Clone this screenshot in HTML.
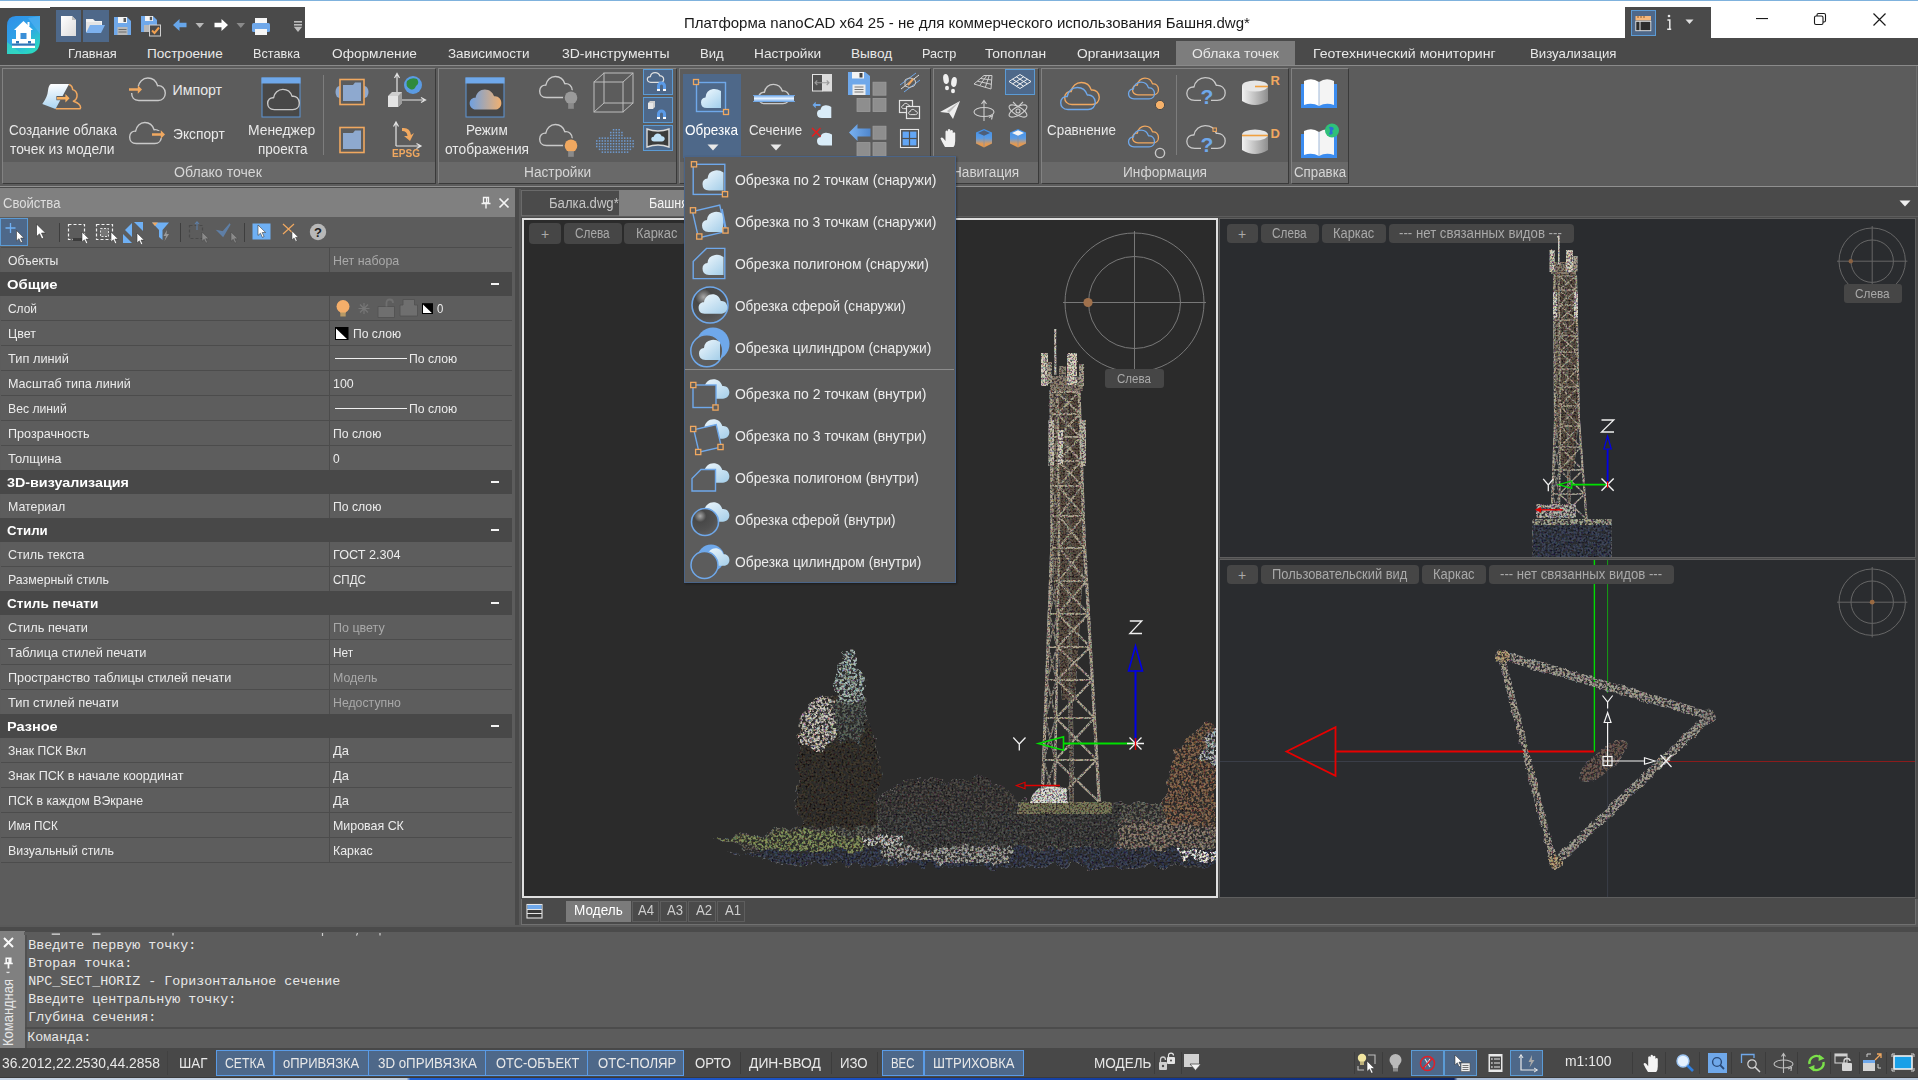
<!DOCTYPE html>
<html><head><meta charset="utf-8"><title>nanoCAD</title>
<style>

html,body{margin:0;padding:0;background:#5c5c5c;}
#root{position:relative;width:1918px;height:1080px;overflow:hidden;background:#5c5c5c;font-family:"Liberation Sans",sans-serif;}
.a{position:absolute;box-sizing:border-box;}
.t{position:absolute;white-space:nowrap;}
svg{overflow:visible;}

</style></head><body>
<svg width="0" height="0" style="position:absolute"><defs><filter id="spk" x="-10%" y="-10%" width="120%" height="120%" color-interpolation-filters="sRGB"><feTurbulence type="fractalNoise" baseFrequency="0.07" numOctaves="3" seed="6" result="dn"/><feDisplacementMap in="SourceGraphic" in2="dn" scale="16" xChannelSelector="R" yChannelSelector="G" result="sg"/><feTurbulence type="fractalNoise" baseFrequency="0.5" numOctaves="2" seed="5" result="n0"/><feColorMatrix in="n0" type="saturate" values="0.22" result="n"/><feComponentTransfer in="n" result="g"><feFuncR type="gamma" amplitude="5.5" exponent="3" offset="0.12"/><feFuncG type="gamma" amplitude="5.5" exponent="3" offset="0.12"/><feFuncB type="gamma" amplitude="5.5" exponent="3" offset="0.12"/><feFuncA type="linear" slope="0" intercept="1"/></feComponentTransfer><feBlend in="sg" in2="g" mode="multiply" result="m"/><feTurbulence type="fractalNoise" baseFrequency="0.35" numOctaves="2" seed="9" result="n2"/><feColorMatrix in="n2" type="matrix" values="0 0 0 0 0  0 0 0 0 0  0 0 0 0 0  6 0 0 0 -2.2" result="a"/><feComposite in="m" in2="a" operator="in" result="c"/><feComposite in="c" in2="sg" operator="in"/></filter><filter id="spk2" x="-10%" y="-10%" width="120%" height="120%" color-interpolation-filters="sRGB"><feTurbulence type="fractalNoise" baseFrequency="0.3" numOctaves="3" seed="12" result="dn"/><feDisplacementMap in="SourceGraphic" in2="dn" scale="1.6" xChannelSelector="R" yChannelSelector="G" result="sg"/><feTurbulence type="fractalNoise" baseFrequency="0.55" numOctaves="2" seed="11" result="n0"/><feColorMatrix in="n0" type="saturate" values="0.22" result="n"/><feComponentTransfer in="n" result="g"><feFuncR type="gamma" amplitude="3.3" exponent="2.2" offset="0.1"/><feFuncG type="gamma" amplitude="3.3" exponent="2.2" offset="0.1"/><feFuncB type="gamma" amplitude="3.3" exponent="2.2" offset="0.1"/><feFuncA type="linear" slope="0" intercept="1"/></feComponentTransfer><feBlend in="sg" in2="g" mode="multiply" result="m"/><feComposite in="m" in2="sg" operator="in"/></filter><filter id="spk4" x="-10%" y="-10%" width="120%" height="120%" color-interpolation-filters="sRGB"><feTurbulence type="fractalNoise" baseFrequency="0.5" numOctaves="2" seed="5" result="n0"/><feColorMatrix in="n0" type="saturate" values="0.22" result="n"/><feComponentTransfer in="n" result="g"><feFuncR type="gamma" amplitude="5.5" exponent="3" offset="0.12"/><feFuncG type="gamma" amplitude="5.5" exponent="3" offset="0.12"/><feFuncB type="gamma" amplitude="5.5" exponent="3" offset="0.12"/><feFuncA type="linear" slope="0" intercept="1"/></feComponentTransfer><feBlend in="SourceGraphic" in2="g" mode="multiply" result="m"/><feTurbulence type="fractalNoise" baseFrequency="0.35" numOctaves="2" seed="9" result="n2"/><feColorMatrix in="n2" type="matrix" values="0 0 0 0 0  0 0 0 0 0  0 0 0 0 0  6 0 0 0 -2.0" result="a"/><feComposite in="m" in2="a" operator="in" result="c"/><feComposite in="c" in2="SourceGraphic" operator="in"/></filter><filter id="spk3" x="-10%" y="-10%" width="120%" height="120%" color-interpolation-filters="sRGB"><feTurbulence type="fractalNoise" baseFrequency="0.15" numOctaves="3" seed="22" result="dn"/><feDisplacementMap in="SourceGraphic" in2="dn" scale="4" xChannelSelector="R" yChannelSelector="G" result="sg"/><feTurbulence type="fractalNoise" baseFrequency="0.5" numOctaves="2" seed="21" result="n0"/><feColorMatrix in="n0" type="saturate" values="0.22" result="n"/><feComponentTransfer in="n" result="g"><feFuncR type="gamma" amplitude="4.6" exponent="2.6" offset="0.1"/><feFuncG type="gamma" amplitude="4.6" exponent="2.6" offset="0.1"/><feFuncB type="gamma" amplitude="4.6" exponent="2.6" offset="0.1"/><feFuncA type="linear" slope="0" intercept="1"/></feComponentTransfer><feBlend in="sg" in2="g" mode="multiply" result="m"/><feTurbulence type="fractalNoise" baseFrequency="0.4" numOctaves="2" seed="4" result="n2"/><feColorMatrix in="n2" type="matrix" values="0 0 0 0 0  0 0 0 0 0  0 0 0 0 0  6 0 0 0 -2.0" result="a"/><feComposite in="m" in2="a" operator="in" result="c"/><feComposite in="c" in2="sg" operator="in"/></filter></defs></svg>
<div id="root">
<div class="a" style="left:0px;top:0px;width:1918px;height:38px;background:#ffffff;"></div>
<div class="a" style="left:0px;top:0px;width:1918px;height:1px;background:#7fb2dd;"></div>
<div class="a" style="left:0px;top:8px;width:50px;height:30px;background:#4a4a4a;"></div>
<div class="a" style="left:50px;top:7px;width:255px;height:31px;background:#4a4a4a;"></div>
<div class="a" style="left:1625px;top:7px;width:86px;height:31px;background:#4a4a4a;"></div>
<div class="a" style="left:0px;top:38px;width:1918px;height:27px;background:#4a4a4a;"></div>
<span id="t1" class="t" style="top:13.60px;font-size:14.5px;line-height:19px;color:#1a1a1a;font-family:'Liberation Sans', sans-serif;left:683.5px;transform-origin:0 50%;transform:scaleX(1.0347);">Платформа nanoCAD x64 25 - не для коммерческого использования Башня.dwg*</span>
<svg class="a" style="left:6px;top:14px;" width="36" height="42" viewBox="0 0 36 42">
    <defs><linearGradient id="lg1" x1="0" y1="0" x2="0.6" y2="1"><stop offset="0" stop-color="#2f8fe9"/><stop offset="0.55" stop-color="#2ea2e6"/><stop offset="1" stop-color="#2ad6c4"/></linearGradient></defs>
    <path d="M10 2 H34 V26 Q34 40 20 40 H1 V12 Q1 2 10 2 Z" fill="url(#lg1)"/>
    <path d="M22 4 L34 2 V20 Z" fill="#55b2f4" opacity="0.6"/>
    <path d="M1 28 L16 40 H1 Z" fill="#35e3b8" opacity="0.6"/>
    <path d="M8 16 L17.5 7 L27 16 Z" fill="#fff"/>
    <rect x="21.5" y="8" width="2" height="4" fill="#fff"/>
    <rect x="10" y="15" width="15" height="11" fill="#fff"/>
    <rect x="14.5" y="19" width="6" height="7" fill="#3a8fd8"/>
    <rect x="6" y="25" width="23" height="9" fill="#fff"/>
    <rect x="6" y="29.5" width="23" height="2.2" fill="#2f76b8"/>
    <rect x="10" y="27" width="3" height="2.5" fill="#2f76b8"/>
    <rect x="22" y="27" width="3" height="2.5" fill="#2f76b8"/>
    </svg>
<div class="a" style="left:56px;top:10px;width:25px;height:32px;background:#4e6889;"></div>
<div class="a" style="left:83px;top:10px;width:26px;height:32px;background:#4e6889;"></div>
<svg class="a" style="left:60px;top:15px;" width="18" height="22" viewBox="0 0 18 22"><defs><linearGradient id="gdoc" x1="0" y1="0" x2="1" y2="1"><stop offset="0" stop-color="#ffffff"/><stop offset="1" stop-color="#dcdcdc"/></linearGradient></defs>
    <path d="M1 1 H12 L16 5 V21 H1 Z" fill="url(#gdoc)"/><path d="M12 1 L16 5 H12 Z" fill="#bdbdbd"/></svg>
<svg class="a" style="left:85px;top:17px;" width="22" height="18" viewBox="0 0 22 18"><path d="M1 2 H8 L10 4 H17 V8 H1 Z" fill="#f2f2f2"/><path d="M1 5 H16 V15 H1 Z" fill="#e4e4e4"/><path d="M5 8 H20 L16 16 H1 Z" fill="#7db1ee"/></svg>
<svg class="a" style="left:113px;top:16px;" width="20" height="20" viewBox="0 0 20 20"><path d="M1 1 H14 L18 5 V19 H1 Z" fill="#6fa8ea"/><rect x="5" y="1" width="9" height="6" fill="#f4f4f4"/><rect x="10.5" y="2" width="2.5" height="4" fill="#5a5a5a"/><rect x="4.5" y="11" width="10" height="8" fill="#b9b9b9"/><path d="M5.5 13.5 H13.5 M5.5 16 H13.5" stroke="#6d6d6d" stroke-width="1"/></svg>
<svg class="a" style="left:140px;top:15px;" width="22" height="22" viewBox="0 0 22 22"><path d="M1 1 H13 L17 5 V17 H1 Z" fill="#6fa8ea"/><rect x="5" y="1" width="8" height="5" fill="#f4f4f4"/><rect x="9.8" y="1.8" width="2.3" height="3.4" fill="#5a5a5a"/><rect x="4" y="10" width="7" height="7" fill="#b9b9b9"/>
    <rect x="9.5" y="10" width="11" height="11" fill="#4a4a4a" stroke="#cfcfcf" stroke-width="1"/><path d="M12 15.5 L14.5 18 L19 12.5" stroke="#f0a050" stroke-width="2" fill="none"/></svg>
<svg class="a" style="left:172px;top:18px;" width="16" height="14" viewBox="0 0 16 14"><path d="M1 7 L7.5 1 V4.8 H14.5 V9.2 H7.5 V13 Z" fill="#67a6ea"/></svg>
<svg class="a" style="left:195px;top:22px;" width="10" height="7" viewBox="0 0 10 7"><path d="M0.5 1 H9 L4.8 6 Z" fill="#b8b8b8"/></svg>
<svg class="a" style="left:213px;top:18px;" width="16" height="14" viewBox="0 0 16 14"><path d="M15 7 L8.5 1 V4.8 H1.5 V9.2 H8.5 V13 Z" fill="#ffffff"/></svg>
<svg class="a" style="left:236px;top:22px;" width="10" height="7" viewBox="0 0 10 7"><path d="M0.5 1 H9 L4.8 6 Z" fill="#8a8a8a"/></svg>
<svg class="a" style="left:251px;top:17px;" width="20" height="19" viewBox="0 0 20 19"><rect x="4" y="1" width="12" height="6" fill="#f6f6f6"/><rect x="1" y="6" width="18" height="9" rx="1.5" fill="#6fa8ea"/><rect x="4" y="12" width="12" height="6" fill="#f6f6f6"/></svg>
<svg class="a" style="left:293px;top:20px;" width="10" height="13" viewBox="0 0 10 13"><rect x="1" y="1" width="8" height="1.6" fill="#bdbdbd"/><rect x="1" y="4" width="8" height="1.6" fill="#bdbdbd"/><path d="M0.8 6.8 H9.2 L5 12 Z" fill="#bdbdbd"/></svg>
<div class="a" style="left:1631px;top:10px;width:25px;height:26px;background:#4e6889;border:1px solid #5b9bd5;"></div>
<svg class="a" style="left:1635px;top:14px;" width="18" height="18" viewBox="0 0 18 18"><rect x="0.5" y="2" width="15.5" height="4.5" fill="#f3b77c"/><rect x="0.8" y="7.3" width="15" height="9.4" fill="#2d2d2d" stroke="#e6e6e6" stroke-width="0.9"/><path d="M5 7.3 V16.7" stroke="#e6e6e6" stroke-width="1"/><path d="M3 2 V4 M6 2 V4 M9 2 V4" stroke="#8a5a2a" stroke-width="1"/></svg>
<svg class="a" style="left:1664px;top:13px;" width="10" height="20" viewBox="0 0 10 20"><circle cx="5" cy="3" r="1.3" fill="#e8e8e8"/><path d="M3.4 7 H5.8 V16 M3.2 16.2 H7.2" stroke="#e8e8e8" stroke-width="1.5" fill="none"/></svg>
<svg class="a" style="left:1685px;top:19px;" width="9" height="6" viewBox="0 0 9 6"><path d="M0.5 0.5 H8.5 L4.5 5 Z" fill="#e0e0e0"/></svg>
<svg class="a" style="left:1755px;top:17px;" width="14" height="3" viewBox="0 0 14 3"><rect x="1" y="1" width="12" height="1.1" fill="#1a1a1a"/></svg>
<svg class="a" style="left:1813px;top:12px;" width="14" height="14" viewBox="0 0 14 14"><rect x="1.5" y="4" width="8.5" height="8.5" rx="1.5" fill="none" stroke="#1a1a1a" stroke-width="1.1"/><path d="M4 4 V3 Q4 1.5 5.5 1.5 H11 Q12.5 1.5 12.5 3 V8.5 Q12.5 10 11 10 H10" fill="none" stroke="#1a1a1a" stroke-width="1.1"/></svg>
<svg class="a" style="left:1872px;top:12px;" width="15" height="15" viewBox="0 0 15 15"><path d="M1.5 1.5 L13.5 13.5 M13.5 1.5 L1.5 13.5" stroke="#1a1a1a" stroke-width="1.2"/></svg>
<div class="a" style="left:1176px;top:41px;width:119px;height:24px;background:#7d7d7d;"></div>
<span id="t2" class="t" style="top:44.70px;font-size:13.6px;line-height:18px;color:#e9e9e9;font-family:'Liberation Sans', sans-serif;left:67.5px;transform-origin:0 50%;transform:scaleX(0.9423);">Главная</span>
<span id="t3" class="t" style="top:44.70px;font-size:13.6px;line-height:18px;color:#e9e9e9;font-family:'Liberation Sans', sans-serif;left:147px;transform-origin:0 50%;transform:scaleX(1.0000);">Построение</span>
<span id="t4" class="t" style="top:44.70px;font-size:13.6px;line-height:18px;color:#e9e9e9;font-family:'Liberation Sans', sans-serif;left:253px;transform-origin:0 50%;transform:scaleX(0.9314);">Вставка</span>
<span id="t5" class="t" style="top:44.70px;font-size:13.6px;line-height:18px;color:#e9e9e9;font-family:'Liberation Sans', sans-serif;left:331.5px;transform-origin:0 50%;transform:scaleX(1.0060);">Оформление</span>
<span id="t6" class="t" style="top:44.70px;font-size:13.6px;line-height:18px;color:#e9e9e9;font-family:'Liberation Sans', sans-serif;left:447.5px;transform-origin:0 50%;transform:scaleX(0.9880);">Зависимости</span>
<span id="t7" class="t" style="top:44.70px;font-size:13.6px;line-height:18px;color:#e9e9e9;font-family:'Liberation Sans', sans-serif;left:561.5px;transform-origin:0 50%;transform:scaleX(1.0286);">3D-инструменты</span>
<span id="t8" class="t" style="top:44.70px;font-size:13.6px;line-height:18px;color:#e9e9e9;font-family:'Liberation Sans', sans-serif;left:700px;transform-origin:0 50%;transform:scaleX(0.9600);">Вид</span>
<span id="t9" class="t" style="top:44.70px;font-size:13.6px;line-height:18px;color:#e9e9e9;font-family:'Liberation Sans', sans-serif;left:753.5px;transform-origin:0 50%;transform:scaleX(1.0075);">Настройки</span>
<span id="t10" class="t" style="top:44.70px;font-size:13.6px;line-height:18px;color:#e9e9e9;font-family:'Liberation Sans', sans-serif;left:851px;transform-origin:0 50%;transform:scaleX(1.0000);">Вывод</span>
<span id="t11" class="t" style="top:44.70px;font-size:13.6px;line-height:18px;color:#e9e9e9;font-family:'Liberation Sans', sans-serif;left:921.5px;transform-origin:0 50%;transform:scaleX(0.9324);">Растр</span>
<span id="t12" class="t" style="top:44.70px;font-size:13.6px;line-height:18px;color:#e9e9e9;font-family:'Liberation Sans', sans-serif;left:985px;transform-origin:0 50%;transform:scaleX(1.0167);">Топоплан</span>
<span id="t13" class="t" style="top:44.70px;font-size:13.6px;line-height:18px;color:#e9e9e9;font-family:'Liberation Sans', sans-serif;left:1077px;transform-origin:0 50%;transform:scaleX(1.0122);">Организация</span>
<span id="t14" class="t" style="top:44.70px;font-size:13.6px;line-height:18px;color:#e9e9e9;font-family:'Liberation Sans', sans-serif;left:1192px;transform-origin:0 50%;transform:scaleX(1.0235);">Облака точек</span>
<span id="t15" class="t" style="top:44.70px;font-size:13.6px;line-height:18px;color:#e9e9e9;font-family:'Liberation Sans', sans-serif;left:1313px;transform-origin:0 50%;transform:scaleX(1.0369);">Геотехнический мониторинг</span>
<span id="t16" class="t" style="top:44.70px;font-size:13.6px;line-height:18px;color:#e9e9e9;font-family:'Liberation Sans', sans-serif;left:1529.5px;transform-origin:0 50%;transform:scaleX(0.9719);">Визуализация</span>
<div class="a" style="left:0px;top:65px;width:1918px;height:122px;background:#5c5c5c;border-top:1px solid #8a8a8a;border-bottom:1px solid #909090;"></div>
<div class="a" style="left:1916px;top:66px;width:1px;height:120px;background:#6c6c6c;"></div>
<div class="a" style="left:0px;top:187px;width:1918px;height:2px;background:#4a4a4a;"></div>
<div class="a" style="left:2px;top:68px;width:434px;height:116px;background:#5c5c5c;border-left:1px solid #828282;border-top:1px solid #828282;border-right:1px solid #3a3a3a;border-bottom:1px solid #3a3a3a;"></div>
<div class="a" style="left:3px;top:162px;width:432px;height:21px;background:#696969;"></div>
<div class="a" style="left:438px;top:68px;width:239px;height:116px;background:#5c5c5c;border-left:1px solid #828282;border-top:1px solid #828282;border-right:1px solid #3a3a3a;border-bottom:1px solid #3a3a3a;"></div>
<div class="a" style="left:439px;top:162px;width:237px;height:21px;background:#696969;"></div>
<div class="a" style="left:679px;top:68px;width:252px;height:116px;background:#5c5c5c;border-left:1px solid #828282;border-top:1px solid #828282;border-right:1px solid #3a3a3a;border-bottom:1px solid #3a3a3a;"></div>
<div class="a" style="left:680px;top:162px;width:250px;height:21px;background:#696969;"></div>
<div class="a" style="left:933px;top:68px;width:106px;height:116px;background:#5c5c5c;border-left:1px solid #828282;border-top:1px solid #828282;border-right:1px solid #3a3a3a;border-bottom:1px solid #3a3a3a;"></div>
<div class="a" style="left:934px;top:162px;width:104px;height:21px;background:#696969;"></div>
<div class="a" style="left:1041px;top:68px;width:248px;height:116px;background:#5c5c5c;border-left:1px solid #828282;border-top:1px solid #828282;border-right:1px solid #3a3a3a;border-bottom:1px solid #3a3a3a;"></div>
<div class="a" style="left:1042px;top:162px;width:246px;height:21px;background:#696969;"></div>
<div class="a" style="left:1291px;top:68px;width:58px;height:116px;background:#5c5c5c;border-left:1px solid #828282;border-top:1px solid #828282;border-right:1px solid #3a3a3a;border-bottom:1px solid #3a3a3a;"></div>
<div class="a" style="left:1292px;top:162px;width:56px;height:21px;background:#696969;"></div>
<span id="t17" class="t" style="top:121.00px;font-size:14.2px;line-height:18px;color:#e9e9e9;font-family:'Liberation Sans', sans-serif;left:8.5px;transform-origin:0 50%;transform:scaleX(0.9474);">Создание облака</span>
<span id="t18" class="t" style="top:140.00px;font-size:14.2px;line-height:18px;color:#e9e9e9;font-family:'Liberation Sans', sans-serif;left:9.5px;transform-origin:0 50%;transform:scaleX(0.9766);">точек из модели</span>
<span id="t19" class="t" style="top:80.80px;font-size:14.2px;line-height:18px;color:#e9e9e9;font-family:'Liberation Sans', sans-serif;left:172.5px;transform-origin:0 50%;transform:scaleX(1.0000);">Импорт</span>
<span id="t20" class="t" style="top:125.00px;font-size:14.2px;line-height:18px;color:#e9e9e9;font-family:'Liberation Sans', sans-serif;left:172.5px;transform-origin:0 50%;transform:scaleX(0.9717);">Экспорт</span>
<span id="t21" class="t" style="top:121.00px;font-size:14.2px;line-height:18px;color:#e9e9e9;font-family:'Liberation Sans', sans-serif;left:248px;transform-origin:0 50%;transform:scaleX(0.9783);">Менеджер</span>
<span id="t22" class="t" style="top:140.00px;font-size:14.2px;line-height:18px;color:#e9e9e9;font-family:'Liberation Sans', sans-serif;left:257.5px;transform-origin:0 50%;transform:scaleX(0.9519);">проекта</span>
<span id="t23" class="t" style="top:164.10px;font-size:13.8px;line-height:18px;color:#d6d6d6;font-family:'Liberation Sans', sans-serif;left:174px;transform-origin:0 50%;transform:scaleX(1.0233);">Облако точек</span>
<svg class="a" style="left:40px;top:80px;" width="46" height="34" viewBox="0 0 46 34"><defs><linearGradient id="gsh" x1="0.3" y1="0" x2="0.4" y2="1"><stop offset="0" stop-color="#ffffff"/><stop offset="1" stop-color="#a9d4f2"/></linearGradient></defs><path d="M10.9 4.1 H29.1 L15.5 29.1 L2.3 23.9 Q7.5 17 8 10.5 Q8.6 5.2 10.9 4.1 Z" fill="url(#gsh)"/><path d="M29.1 4.5 Q32.6 6 32.6 9.6 Q37.6 11 37 16.5 Q36.6 20 33.4 21.2 Q40.6 23.5 40.6 27.6 L40 28.8 H15.8" fill="none" stroke="#f0a860" stroke-width="1.5" stroke-linejoin="round"/><path d="M16.4 16.099999999999998 H24.6 V12.799999999999999 L30.0 18.2 L24.6 23.6 V20.3 H16.4 Z" fill="#5c5c5c"/><path d="M17 17.0 H25.400000000000002 V14.0 L29.6 18.2 L25.400000000000002 22.4 V19.4 H17 Z" fill="#f7b060"/></svg>
<svg class="a" style="left:128px;top:74px;" width="42" height="30" viewBox="0 0 42 30"><path transform="translate(3.00,2.50) scale(0.3500,0.3864)" d="M22 62 C8 62 2 53 2 44 C2 34 10 27 20 28 C22 14 34 4 48 4 C62 4 72 12 76 24 C88 22 98 31 98 43 C98 54 90 62 78 62 Z" fill="none" stroke="#c9c9c9" stroke-width="1.4" vector-effect="non-scaling-stroke" stroke-linejoin="round" /><rect x="0" y="12" width="14" height="7" fill="#5c5c5c"/><path d="M1 14.3 H9.8 V11.3 L14 15.5 L9.8 19.7 V16.7 H1 Z" fill="#f0a860"/></svg>
<svg class="a" style="left:128px;top:118px;" width="42" height="30" viewBox="0 0 42 30"><path transform="translate(1.00,3.00) scale(0.3300,0.3636)" d="M22 62 C8 62 2 53 2 44 C2 34 10 27 20 28 C22 14 34 4 48 4 C62 4 72 12 76 24 C88 22 98 31 98 43 C98 54 90 62 78 62 Z" fill="none" stroke="#c9c9c9" stroke-width="1.4" vector-effect="non-scaling-stroke" stroke-linejoin="round" /><rect x="22" y="13" width="14" height="7" fill="#5c5c5c"/><path d="M24 15.3 H32.8 V12.3 L37 16.5 L32.8 20.7 V17.7 H24 Z" fill="#f0a860"/></svg>
<svg class="a" style="left:261px;top:77px;" width="40" height="42" viewBox="0 0 40 42"><rect x="1" y="1" width="38" height="39" fill="#484848" stroke="#5d95d6" stroke-width="1"/><rect x="0.5" y="0.5" width="39" height="6" fill="#6fa8ea"/><path transform="translate(6.00,11.00) scale(0.3300,0.3485)" d="M22 62 C8 62 2 53 2 44 C2 34 10 27 20 28 C22 14 34 4 48 4 C62 4 72 12 76 24 C88 22 98 31 98 43 C98 54 90 62 78 62 Z" fill="none" stroke="#c9c9c9" stroke-width="1.4" vector-effect="non-scaling-stroke" stroke-linejoin="round" /></svg>
<div class="a" style="left:323px;top:75px;width:1px;height:80px;background:#7d7d7d;"></div>
<svg class="a" style="left:334px;top:78px;" width="36" height="28" viewBox="0 0 36 28"><ellipse cx="5.5" cy="14" rx="4" ry="6" fill="#8ea9cf"/><ellipse cx="30.5" cy="14" rx="4" ry="6" fill="#8ea9cf"/><rect x="6" y="1.5" width="24" height="25" fill="#5c5c5c" stroke="#f0a860" stroke-width="1.6"/><path d="M9 7 H19 L21 4.5 H27 V23 H9 Z" fill="#8ea9cf"/></svg>
<svg class="a" style="left:334px;top:126px;" width="36" height="28" viewBox="0 0 36 28"><rect x="6" y="1.5" width="24" height="25" fill="#5c5c5c" stroke="#f0a860" stroke-width="1.6"/><path d="M9 7 H19 L21 4.5 H27 V23 H9 Z" fill="#8ea9cf"/></svg>
<svg class="a" style="left:386px;top:72px;" width="42" height="42" viewBox="0 0 42 42"><path d="M11 28 V3 M8.5 6 L11 1.5 L13.5 6" stroke="#e4e4e4" stroke-width="1.2" fill="none"/><path d="M14 28 H38 M35 25.5 L39.5 28 L35 30.5" stroke="#e4e4e4" stroke-width="1.2" fill="none"/>
    <circle cx="27" cy="13" r="9" fill="#5b9be3"/><path d="M21 9 Q25 5 31 7 Q34 11 30 14 Q28 19 24 17 Q19 14 21 9 Z" fill="#2f8a3c"/>
    <path d="M2 24 L6 20 H16 V31 L12 35 H2 Z" fill="#cfcfcf"/><path d="M2 24 H12 V35 H2 Z" fill="#e4e4e4"/><path d="M12 24 L16 20 V31 L12 35 Z" fill="#9d9d9d"/></svg>
<svg class="a" style="left:390px;top:120px;" width="34" height="40" viewBox="0 0 34 40"><path d="M6 26 V3 M3.5 6.5 L6 2 L8.5 6.5" stroke="#e4e4e4" stroke-width="1.2" fill="none"/><path d="M6 26 H30 M26.5 23.5 L31 26 L26.5 28.5" stroke="#e4e4e4" stroke-width="1.2" fill="none"/>
    <path d="M12 8 Q20 7 21 15 L24 13 L20 21 L14 16 L17.5 16 Q17 11 12 11 Z" fill="#f0a860"/></svg>
<span id="t24" class="t" style="top:146.00px;font-size:11.5px;line-height:15px;color:#f0a860;font-family:'Liberation Sans', sans-serif;font-weight:bold;left:392px;transform-origin:0 50%;transform:scaleX(0.8750);">EPSG</span>
<span id="t25" class="t" style="top:121.00px;font-size:14.2px;line-height:18px;color:#e9e9e9;font-family:'Liberation Sans', sans-serif;left:465.5px;transform-origin:0 50%;transform:scaleX(0.9545);">Режим</span>
<span id="t26" class="t" style="top:140.00px;font-size:14.2px;line-height:18px;color:#e9e9e9;font-family:'Liberation Sans', sans-serif;left:444.5px;transform-origin:0 50%;transform:scaleX(0.9713);">отображения</span>
<span id="t27" class="t" style="top:164.10px;font-size:13.8px;line-height:18px;color:#d6d6d6;font-family:'Liberation Sans', sans-serif;left:523.5px;transform-origin:0 50%;transform:scaleX(0.9926);">Настройки</span>
<svg class="a" style="left:465px;top:77px;" width="40" height="42" viewBox="0 0 40 42"><defs><linearGradient id="gcl" x1="0" y1="0" x2="1" y2="0"><stop offset="0" stop-color="#6fa0e0"/><stop offset="1" stop-color="#f0b070"/></linearGradient></defs>
    <rect x="1" y="1" width="38" height="39" fill="#484848" stroke="#5d95d6" stroke-width="1"/><rect x="0.5" y="0.5" width="39" height="6" fill="#6fa8ea"/><path transform="translate(4.00,11.00) scale(0.3300,0.3485)" d="M22 62 C8 62 2 53 2 44 C2 34 10 27 20 28 C22 14 34 4 48 4 C62 4 72 12 76 24 C88 22 98 31 98 43 C98 54 90 62 78 62 Z" fill="url(#gcl)" stroke="none" stroke-width="0" vector-effect="non-scaling-stroke" stroke-linejoin="round" /></svg>
<svg class="a" style="left:538px;top:73px;" width="42" height="40" viewBox="0 0 42 40"><path transform="translate(1.00,2.00) scale(0.3400,0.3636)" d="M22 62 C8 62 2 53 2 44 C2 34 10 27 20 28 C22 14 34 4 48 4 C62 4 72 12 76 24 C88 22 98 31 98 43 C98 54 90 62 78 62 Z" fill="none" stroke="#c9c9c9" stroke-width="1.4" vector-effect="non-scaling-stroke" stroke-linejoin="round" /><circle cx="33" cy="25" r="8" fill="#5c5c5c"/><circle cx="33" cy="24.8" r="6.3" fill="#9a9a9a"/><rect x="30.16" y="30.16" width="5.67" height="5.67" fill="#8a8a8a"/></svg>
<svg class="a" style="left:538px;top:121px;" width="42" height="40" viewBox="0 0 42 40"><path transform="translate(1.00,2.00) scale(0.3400,0.3636)" d="M22 62 C8 62 2 53 2 44 C2 34 10 27 20 28 C22 14 34 4 48 4 C62 4 72 12 76 24 C88 22 98 31 98 43 C98 54 90 62 78 62 Z" fill="none" stroke="#c9c9c9" stroke-width="1.4" vector-effect="non-scaling-stroke" stroke-linejoin="round" /><circle cx="33" cy="25" r="8" fill="#5c5c5c"/><circle cx="33" cy="24.8" r="6.3" fill="#f0a860"/><rect x="30.16" y="30.16" width="5.67" height="5.67" fill="#8a8a8a"/></svg>
<svg class="a" style="left:592px;top:71px;" width="44" height="44" viewBox="0 0 44 44"><g fill="none" stroke="#bdbdbd" stroke-width="1"><rect x="2" y="11" width="29" height="30"/><rect x="12" y="2" width="29" height="30"/><path d="M2 11 L12 2 M31 11 L41 2 M2 41 L12 32 M31 41 L41 32"/></g></svg>
<svg class="a" style="left:594px;top:127px;" width="40" height="28" viewBox="0 0 40 28"><rect x="18.8" y="2.0" width="1.5" height="1.5" fill="#6f9bd0"/><rect x="21.6" y="2.0" width="1.5" height="1.5" fill="#6f9bd0"/><rect x="24.4" y="2.0" width="1.5" height="1.5" fill="#6f9bd0"/><rect x="16.0" y="4.8" width="1.5" height="1.5" fill="#6f9bd0"/><rect x="18.8" y="4.8" width="1.5" height="1.5" fill="#6f9bd0"/><rect x="21.6" y="4.8" width="1.5" height="1.5" fill="#6f9bd0"/><rect x="24.4" y="4.8" width="1.5" height="1.5" fill="#6f9bd0"/><rect x="27.2" y="4.8" width="1.5" height="1.5" fill="#6f9bd0"/><rect x="16.0" y="7.6" width="1.5" height="1.5" fill="#6f9bd0"/><rect x="18.8" y="7.6" width="1.5" height="1.5" fill="#6f9bd0"/><rect x="21.6" y="7.6" width="1.5" height="1.5" fill="#6f9bd0"/><rect x="24.4" y="7.6" width="1.5" height="1.5" fill="#6f9bd0"/><rect x="27.2" y="7.6" width="1.5" height="1.5" fill="#6f9bd0"/><rect x="4.8" y="10.4" width="1.5" height="1.5" fill="#6f9bd0"/><rect x="7.6" y="10.4" width="1.5" height="1.5" fill="#6f9bd0"/><rect x="10.4" y="10.4" width="1.5" height="1.5" fill="#6f9bd0"/><rect x="13.2" y="10.4" width="1.5" height="1.5" fill="#6f9bd0"/><rect x="16.0" y="10.4" width="1.5" height="1.5" fill="#6f9bd0"/><rect x="18.8" y="10.4" width="1.5" height="1.5" fill="#6f9bd0"/><rect x="21.6" y="10.4" width="1.5" height="1.5" fill="#6f9bd0"/><rect x="24.4" y="10.4" width="1.5" height="1.5" fill="#6f9bd0"/><rect x="27.2" y="10.4" width="1.5" height="1.5" fill="#6f9bd0"/><rect x="30.0" y="10.4" width="1.5" height="1.5" fill="#6f9bd0"/><rect x="32.8" y="10.4" width="1.5" height="1.5" fill="#6f9bd0"/><rect x="35.6" y="10.4" width="1.5" height="1.5" fill="#6f9bd0"/><rect x="2.0" y="13.2" width="1.5" height="1.5" fill="#6f9bd0"/><rect x="4.8" y="13.2" width="1.5" height="1.5" fill="#6f9bd0"/><rect x="7.6" y="13.2" width="1.5" height="1.5" fill="#6f9bd0"/><rect x="10.4" y="13.2" width="1.5" height="1.5" fill="#6f9bd0"/><rect x="13.2" y="13.2" width="1.5" height="1.5" fill="#6f9bd0"/><rect x="16.0" y="13.2" width="1.5" height="1.5" fill="#6f9bd0"/><rect x="18.8" y="13.2" width="1.5" height="1.5" fill="#6f9bd0"/><rect x="21.6" y="13.2" width="1.5" height="1.5" fill="#6f9bd0"/><rect x="24.4" y="13.2" width="1.5" height="1.5" fill="#6f9bd0"/><rect x="27.2" y="13.2" width="1.5" height="1.5" fill="#6f9bd0"/><rect x="30.0" y="13.2" width="1.5" height="1.5" fill="#6f9bd0"/><rect x="32.8" y="13.2" width="1.5" height="1.5" fill="#6f9bd0"/><rect x="35.6" y="13.2" width="1.5" height="1.5" fill="#6f9bd0"/><rect x="38.4" y="13.2" width="1.5" height="1.5" fill="#6f9bd0"/><rect x="2.0" y="16.0" width="1.5" height="1.5" fill="#6f9bd0"/><rect x="4.8" y="16.0" width="1.5" height="1.5" fill="#6f9bd0"/><rect x="7.6" y="16.0" width="1.5" height="1.5" fill="#6f9bd0"/><rect x="10.4" y="16.0" width="1.5" height="1.5" fill="#6f9bd0"/><rect x="13.2" y="16.0" width="1.5" height="1.5" fill="#6f9bd0"/><rect x="16.0" y="16.0" width="1.5" height="1.5" fill="#6f9bd0"/><rect x="18.8" y="16.0" width="1.5" height="1.5" fill="#6f9bd0"/><rect x="21.6" y="16.0" width="1.5" height="1.5" fill="#6f9bd0"/><rect x="24.4" y="16.0" width="1.5" height="1.5" fill="#6f9bd0"/><rect x="27.2" y="16.0" width="1.5" height="1.5" fill="#6f9bd0"/><rect x="30.0" y="16.0" width="1.5" height="1.5" fill="#6f9bd0"/><rect x="32.8" y="16.0" width="1.5" height="1.5" fill="#6f9bd0"/><rect x="35.6" y="16.0" width="1.5" height="1.5" fill="#6f9bd0"/><rect x="38.4" y="16.0" width="1.5" height="1.5" fill="#6f9bd0"/><rect x="2.0" y="18.8" width="1.5" height="1.5" fill="#6f9bd0"/><rect x="4.8" y="18.8" width="1.5" height="1.5" fill="#6f9bd0"/><rect x="7.6" y="18.8" width="1.5" height="1.5" fill="#6f9bd0"/><rect x="10.4" y="18.8" width="1.5" height="1.5" fill="#6f9bd0"/><rect x="13.2" y="18.8" width="1.5" height="1.5" fill="#6f9bd0"/><rect x="16.0" y="18.8" width="1.5" height="1.5" fill="#6f9bd0"/><rect x="18.8" y="18.8" width="1.5" height="1.5" fill="#6f9bd0"/><rect x="21.6" y="18.8" width="1.5" height="1.5" fill="#6f9bd0"/><rect x="24.4" y="18.8" width="1.5" height="1.5" fill="#6f9bd0"/><rect x="27.2" y="18.8" width="1.5" height="1.5" fill="#6f9bd0"/><rect x="30.0" y="18.8" width="1.5" height="1.5" fill="#6f9bd0"/><rect x="32.8" y="18.8" width="1.5" height="1.5" fill="#6f9bd0"/><rect x="35.6" y="18.8" width="1.5" height="1.5" fill="#6f9bd0"/><rect x="38.4" y="18.8" width="1.5" height="1.5" fill="#6f9bd0"/><rect x="4.8" y="21.6" width="1.5" height="1.5" fill="#6f9bd0"/><rect x="7.6" y="21.6" width="1.5" height="1.5" fill="#6f9bd0"/><rect x="10.4" y="21.6" width="1.5" height="1.5" fill="#6f9bd0"/><rect x="13.2" y="21.6" width="1.5" height="1.5" fill="#6f9bd0"/><rect x="16.0" y="21.6" width="1.5" height="1.5" fill="#6f9bd0"/><rect x="18.8" y="21.6" width="1.5" height="1.5" fill="#6f9bd0"/><rect x="21.6" y="21.6" width="1.5" height="1.5" fill="#6f9bd0"/><rect x="24.4" y="21.6" width="1.5" height="1.5" fill="#6f9bd0"/><rect x="27.2" y="21.6" width="1.5" height="1.5" fill="#6f9bd0"/><rect x="30.0" y="21.6" width="1.5" height="1.5" fill="#6f9bd0"/><rect x="32.8" y="21.6" width="1.5" height="1.5" fill="#6f9bd0"/><rect x="35.6" y="21.6" width="1.5" height="1.5" fill="#6f9bd0"/><rect x="7.6" y="24.4" width="1.5" height="1.5" fill="#6f9bd0"/><rect x="10.4" y="24.4" width="1.5" height="1.5" fill="#6f9bd0"/><rect x="13.2" y="24.4" width="1.5" height="1.5" fill="#6f9bd0"/><rect x="16.0" y="24.4" width="1.5" height="1.5" fill="#6f9bd0"/><rect x="18.8" y="24.4" width="1.5" height="1.5" fill="#6f9bd0"/><rect x="21.6" y="24.4" width="1.5" height="1.5" fill="#6f9bd0"/><rect x="24.4" y="24.4" width="1.5" height="1.5" fill="#6f9bd0"/><rect x="27.2" y="24.4" width="1.5" height="1.5" fill="#6f9bd0"/><rect x="30.0" y="24.4" width="1.5" height="1.5" fill="#6f9bd0"/><rect x="32.8" y="24.4" width="1.5" height="1.5" fill="#6f9bd0"/></svg>
<div class="a" style="left:643px;top:69px;width:30px;height:26px;background:#4e6889;border:1px solid #5b9bd5;"></div>
<div class="a" style="left:643px;top:97px;width:30px;height:26px;background:#4e6889;border:1px solid #5b9bd5;"></div>
<div class="a" style="left:643px;top:125px;width:30px;height:26px;background:#4e6889;border:1px solid #5b9bd5;"></div>
<svg class="a" style="left:645px;top:71px;" width="26" height="22" viewBox="0 0 26 22"><path transform="translate(2.00,1.00) scale(0.1700,0.1667)" d="M22 62 C8 62 2 53 2 44 C2 34 10 27 20 28 C22 14 34 4 48 4 C62 4 72 12 76 24 C88 22 98 31 98 43 C98 54 90 62 78 62 Z" fill="none" stroke="#e0e0e0" stroke-width="1.2" vector-effect="non-scaling-stroke" stroke-linejoin="round" /><path d="M12 19 v-4 a4.5 4.5 0 0 1 9 0 v4 h-3 v-4 a1.5 1.5 0 0 0 -3 0 v4 z" fill="#5b9be8"/><rect x="12" y="18" width="3" height="2" fill="#fff"/><rect x="18" y="18" width="3" height="2" fill="#fff"/></svg>
<svg class="a" style="left:645px;top:99px;" width="26" height="22" viewBox="0 0 26 22"><path d="M3 4 L5 2 H10 V8 L8 10 H3 Z" fill="#cfcfcf"/><rect x="3" y="4" width="5" height="6" fill="#e8e8e8"/><path d="M12 19 v-4 a4.5 4.5 0 0 1 9 0 v4 h-3 v-4 a1.5 1.5 0 0 0 -3 0 v4 z" fill="#5b9be8"/><rect x="12" y="18" width="3" height="2" fill="#fff"/><rect x="18" y="18" width="3" height="2" fill="#fff"/></svg>
<svg class="a" style="left:645px;top:127px;" width="26" height="22" viewBox="0 0 26 22"><path d="M2 2 Q13 6 24 2 V20 Q13 16 2 20 Z" fill="#3c3c3c" stroke="#dcdcdc" stroke-width="1.4"/><path transform="translate(6.00,6.00) scale(0.1400,0.1364)" d="M22 62 C8 62 2 53 2 44 C2 34 10 27 20 28 C22 14 34 4 48 4 C62 4 72 12 76 24 C88 22 98 31 98 43 C98 54 90 62 78 62 Z" fill="#bfe0f6" stroke="none" stroke-width="0" vector-effect="non-scaling-stroke" stroke-linejoin="round" /></svg>
<div class="a" style="left:683px;top:74px;width:58px;height:84px;background:#4e6889;"></div>
<span id="t28" class="t" style="top:121.00px;font-size:14.2px;line-height:18px;color:#ffffff;font-family:'Liberation Sans', sans-serif;left:685px;transform-origin:0 50%;transform:scaleX(0.9554);">Обрезка</span>
<span id="t29" class="t" style="top:121.00px;font-size:14.2px;line-height:18px;color:#e9e9e9;font-family:'Liberation Sans', sans-serif;left:748.5px;transform-origin:0 50%;transform:scaleX(0.9386);">Сечение</span>
<svg class="a" style="left:692px;top:78px;" width="40" height="40" viewBox="0 0 40 40"><defs><linearGradient id="gcb" x1="0" y1="0" x2="0.8" y2="1"><stop offset="0" stop-color="#f4fbff"/><stop offset="1" stop-color="#a9d3ee"/></linearGradient></defs>
    <rect x="4.5" y="4.5" width="29" height="29" fill="none" stroke="#6fa8ea" stroke-width="1.4"/>
    <path d="M15 30 Q9 30 9 24.5 Q9 20 13.5 19.5 Q14 12 21 11 Q25 10.5 29 13 V30 Z" fill="url(#gcb)"/>
    <rect x="1.5" y="1.5" width="5" height="5" fill="#4e6889" stroke="#f0a860" stroke-width="1.3"/><rect x="31.5" y="31.5" width="5" height="5" fill="#4e6889" stroke="#f0a860" stroke-width="1.3"/></svg>
<svg class="a" style="left:707px;top:144px;" width="12" height="7" viewBox="0 0 12 7"><path d="M0.5 0.5 H11.5 L6 6.5 Z" fill="#e8e8e8"/></svg>
<svg class="a" style="left:770px;top:144px;" width="12" height="7" viewBox="0 0 12 7"><path d="M0.5 0.5 H11.5 L6 6.5 Z" fill="#e8e8e8"/></svg>
<svg class="a" style="left:753px;top:82px;" width="44" height="30" viewBox="0 0 44 30"><path transform="translate(5.00,1.00) scale(0.3200,0.3333)" d="M22 62 C8 62 2 53 2 44 C2 34 10 27 20 28 C22 14 34 4 48 4 C62 4 72 12 76 24 C88 22 98 31 98 43 C98 54 90 62 78 62 Z" fill="none" stroke="#c9c9c9" stroke-width="1.4" vector-effect="non-scaling-stroke" stroke-linejoin="round" /><rect x="1" y="13.5" width="40" height="6" fill="#9cc4f2"/><rect x="1" y="15.5" width="40" height="2" fill="#e6f2ff"/><path d="M0 13.5 H42 M0 19.5 H42" stroke="#6fa8ea" stroke-width="0.9"/></svg>
<svg class="a" style="left:811px;top:73px;" width="22" height="20" viewBox="0 0 22 20"><rect x="1.5" y="1.5" width="10" height="16.5" fill="#505050" stroke="#e4e4e4" stroke-width="1"/><rect x="11.5" y="1" width="9.5" height="17.5" fill="#dcdcdc"/><path d="M4 9.7 H18 M6.3 7.5 L4 9.7 L6.3 12 M15.7 7.5 L18 9.7 L15.7 12" stroke="#9a9a9a" stroke-width="1.1" fill="none"/></svg>
<svg class="a" style="left:811px;top:100px;" width="24" height="20" viewBox="0 0 24 20"><path d="M11 18 Q6 18 6 13.5 Q6 10 9.5 9.7 Q10 5.5 14.5 5.2 Q18 5 20.3 7 V18 Z" fill="#d9ecf8"/><path d="M9.5 4.1 H4.7 V1.7999999999999998 L1.5 5 L4.7 8.2 V5.9 H9.5 Z" fill="#6fa8ea"/></svg>
<svg class="a" style="left:811px;top:127px;" width="24" height="20" viewBox="0 0 24 20"><path d="M11 18.5 Q6 18.5 6 14 Q6 10.5 9.5 10.2 Q10 6 14.5 5.7 Q18 5.5 21 7.5 V18.5 Z" fill="#d9ecf8"/><path d="M1 1 L9.5 9.5 M9.5 1 L1 9.5" stroke="#e02020" stroke-width="1.7"/></svg>
<svg class="a" style="left:847px;top:71px;" width="42" height="42" viewBox="0 0 42 42"><path d="M1 1 H18 L23 5 V24 H1 Z" fill="#6fa8ea"/><rect x="5" y="1" width="12" height="6.5" fill="#f4f4f4"/><rect x="12.5" y="2" width="3" height="4.5" fill="#444"/><rect x="5.5" y="13.5" width="13" height="10.5" fill="#ececec"/><path d="M7.5 16 H16.5 M7.5 18.5 H16.5 M7.5 21 H16.5" stroke="#777" stroke-width="1"/><rect x="26" y="11.2" width="13" height="13" fill="#8e8e8e" stroke="#9c9c9c" stroke-width="0.8"/><rect x="10" y="27.5" width="13" height="13" fill="#8e8e8e" stroke="#9c9c9c" stroke-width="0.8"/><rect x="26" y="27.5" width="13" height="13" fill="#8e8e8e" stroke="#9c9c9c" stroke-width="0.8"/></svg>
<svg class="a" style="left:847px;top:122px;overflow:hidden;" width="42" height="36" viewBox="0 0 42 36"><defs><linearGradient id="garr" x1="0" y1="0" x2="1" y2="0"><stop offset="0" stop-color="#79b2f2"/><stop offset="1" stop-color="#4f86cc"/></linearGradient></defs><path d="M2 10.5 L10.5 2 V6.5 H23.5 V14.5 H10.5 V19 Z" fill="url(#garr)"/><rect x="26" y="4.2" width="13" height="13" fill="#8e8e8e" stroke="#9c9c9c" stroke-width="0.8"/><rect x="10" y="20.6" width="13" height="13" fill="#8e8e8e" stroke="#9c9c9c" stroke-width="0.8"/><rect x="26" y="20.6" width="13" height="13" fill="#8e8e8e" stroke="#9c9c9c" stroke-width="0.8"/></svg>
<svg class="a" style="left:898px;top:72px;" width="24" height="22" viewBox="0 0 24 22"><path d="M3 17 L21 3" stroke="#dcdcdc" stroke-width="1"/><path d="M2 13 L18 1 M6 20 L22 8" stroke="#6fa8ea" stroke-width="1"/><path d="M7 8 Q12 4 17 8 Q19 11 16 14 Q11 17 7 14 Z" fill="none" stroke="#c9c9c9" stroke-width="1"/><path d="M10 13 L15 7" stroke="#f0a860" stroke-width="2"/></svg>
<svg class="a" style="left:898px;top:99px;" width="24" height="22" viewBox="0 0 24 22"><rect x="1.5" y="1.5" width="13" height="12" fill="#5c5c5c" stroke="#e4e4e4" stroke-width="1.2"/><path transform="translate(3.50,4.00) scale(0.0900,0.0909)" d="M22 62 C8 62 2 53 2 44 C2 34 10 27 20 28 C22 14 34 4 48 4 C62 4 72 12 76 24 C88 22 98 31 98 43 C98 54 90 62 78 62 Z" fill="none" stroke="#e4e4e4" stroke-width="1" vector-effect="non-scaling-stroke" stroke-linejoin="round" /><rect x="8.5" y="7.5" width="13" height="12" fill="#5c5c5c" stroke="#e4e4e4" stroke-width="1.2"/><path transform="translate(10.50,10.00) scale(0.0900,0.0909)" d="M22 62 C8 62 2 53 2 44 C2 34 10 27 20 28 C22 14 34 4 48 4 C62 4 72 12 76 24 C88 22 98 31 98 43 C98 54 90 62 78 62 Z" fill="none" stroke="#e4e4e4" stroke-width="1" vector-effect="non-scaling-stroke" stroke-linejoin="round" /></svg>
<svg class="a" style="left:899px;top:128px;" width="22" height="22" viewBox="0 0 22 22"><rect x="1.5" y="1.5" width="18" height="18" fill="#505050" stroke="#e8e8e8" stroke-width="1.1"/><rect x="3.6" y="3.6" width="6.3" height="6.3" fill="#62a6f6"/><rect x="11.1" y="3.6" width="6.3" height="6.3" fill="#62a6f6"/><rect x="3.6" y="11.1" width="6.3" height="6.3" fill="#62a6f6"/><rect x="11.1" y="11.1" width="6.3" height="6.3" fill="#62a6f6"/></svg>
<span id="t30" class="t" style="top:164.10px;font-size:13.8px;line-height:18px;color:#d6d6d6;font-family:'Liberation Sans', sans-serif;left:951.5px;transform-origin:0 50%;transform:scaleX(0.9853);">Навигация</span>
<div class="a" style="left:1005px;top:69px;width:30px;height:26px;background:#4e6889;border:1px solid #5b9bd5;"></div>
<svg class="a" style="left:940px;top:72px;" width="20" height="22" viewBox="0 0 20 22"><ellipse cx="6" cy="7" rx="2.8" ry="5" fill="#f0f0f0" transform="rotate(-8 6 7)"/><ellipse cx="7" cy="16" rx="2" ry="2.2" fill="#f0f0f0"/><ellipse cx="14" cy="10" rx="2.8" ry="5" fill="#f0f0f0" transform="rotate(8 14 10)"/><ellipse cx="13" cy="19" rx="2" ry="2.2" fill="#f0f0f0"/></svg>
<svg class="a" style="left:972px;top:73px;" width="24" height="18" viewBox="0 0 24 18"><g stroke="#cdcdcd" stroke-width="1" fill="none"><path d="M12 2.5 H20 L19 16 L2 11 Z"/><path d="M14.7 2.5 L7.6 12.7 M17.3 2.5 L13.3 14.4 M8.6 5.5 L19.7 7 M5.4 8.2 L19.4 11.3"/></g></svg>
<svg class="a" style="left:1008px;top:73px;" width="24" height="18" viewBox="0 0 24 18"><g stroke="#f0f0f0" stroke-width="1" fill="none"><path d="M12 1.5 L23 8.5 L12 15.5 L1 8.5 Z"/><path d="M8.3 3.8 L19.3 10.8 M4.6 6.2 L15.6 13.2 M15.7 3.8 L4.7 10.8 M19.4 6.2 L8.4 13.2"/></g></svg>
<svg class="a" style="left:939px;top:100px;" width="22" height="20" viewBox="0 0 22 20"><path d="M1 12 L21 1 L14 19 L10 13 Z" fill="#f0f0f0"/><path d="M10 13 L21 1 L8 11 Z" fill="#bdbdbd"/></svg>
<svg class="a" style="left:972px;top:99px;" width="24" height="24" viewBox="0 0 24 24"><g stroke="#cdcdcd" stroke-width="1.1" fill="none"><ellipse cx="12" cy="13" rx="10" ry="4.5"/><path d="M12 2 V22 M9.5 5 L12 1.5 L14.5 5"/><path d="M17 18.5 L20.5 16.5 L19.5 20.5"/></g></svg>
<svg class="a" style="left:1006px;top:99px;" width="24" height="24" viewBox="0 0 24 24"><g stroke="#cdcdcd" stroke-width="1.1" fill="none"><ellipse cx="12" cy="12" rx="10" ry="4" transform="rotate(30 12 12)"/><ellipse cx="12" cy="12" rx="10" ry="4" transform="rotate(-30 12 12)"/><circle cx="12" cy="12" r="2"/><path d="M7 3 L12 8 L17 3"/></g></svg>
<svg class="a" style="left:939px;top:127px;" width="22" height="22" viewBox="0 0 22 22"><path d="M6 20 Q3 15 1.5 11.5 Q2.5 9.5 4.5 11.5 L6.5 14 V4.5 Q7.5 2.5 8.8 4.5 V10 V2.8 Q10 1 11.3 2.8 V10 V3.8 Q12.6 2 13.8 3.8 V10.5 V6 Q15.2 4.4 16.2 6 V14 Q16.2 18 14.5 20 Z" fill="#f0f0f0"/></svg>
<svg class="a" style="left:975px;top:128px;" width="18" height="20" viewBox="0 0 18 20"><defs><linearGradient id="gq1" x1="0" y1="0" x2="0" y2="1"><stop offset="0" stop-color="#3f8fe8"/><stop offset="0.5" stop-color="#5a9ce6"/><stop offset="0.8" stop-color="#e09a56"/><stop offset="1" stop-color="#f0963c"/></linearGradient></defs><path d="M9 1 L17 4.5 V15.5 L9 19.5 L1 15.5 V4.5 Z" fill="url(#gq1)"/><path d="M9 2.3 L15 5 L9 7.8 L3 5 Z" fill="#4e5e78"/><path d="M9 8.5 V19" stroke="#7e8ca8" stroke-width="0.7"/></svg>
<svg class="a" style="left:1009px;top:128px;" width="18" height="20" viewBox="0 0 18 20"><defs><linearGradient id="gq2" x1="0" y1="0" x2="0" y2="1"><stop offset="0" stop-color="#3f8fe8"/><stop offset="0.5" stop-color="#5a9ce6"/><stop offset="0.8" stop-color="#e09a56"/><stop offset="1" stop-color="#f0963c"/></linearGradient></defs><path d="M9 1 L17 4.5 V15.5 L9 19.5 L1 15.5 V4.5 Z" fill="url(#gq2)"/><path d="M9 2.3 L15 5 L9 7.8 L3 5 Z" fill="#f4f4f4"/><path d="M9 8.5 V19" stroke="#7e8ca8" stroke-width="0.7"/></svg>
<span id="t31" class="t" style="top:121.00px;font-size:14.2px;line-height:18px;color:#e9e9e9;font-family:'Liberation Sans', sans-serif;left:1047px;transform-origin:0 50%;transform:scaleX(0.9452);">Сравнение</span>
<span id="t32" class="t" style="top:164.10px;font-size:13.8px;line-height:18px;color:#d6d6d6;font-family:'Liberation Sans', sans-serif;left:1122.5px;transform-origin:0 50%;transform:scaleX(0.9940);">Информация</span>
<svg class="a" style="left:1058px;top:78px;" width="46" height="36" viewBox="0 0 46 36"><path transform="translate(6.00,3.00) scale(0.3600,0.3788)" d="M22 62 C8 62 2 53 2 44 C2 34 10 27 20 28 C22 14 34 4 48 4 C62 4 72 12 76 24 C88 22 98 31 98 43 C98 54 90 62 78 62 Z" fill="none" stroke="#f0a860" stroke-width="1.4" vector-effect="non-scaling-stroke" stroke-linejoin="round" /><path transform="translate(2.00,8.00) scale(0.3600,0.3788)" d="M22 62 C8 62 2 53 2 44 C2 34 10 27 20 28 C22 14 34 4 48 4 C62 4 72 12 76 24 C88 22 98 31 98 43 C98 54 90 62 78 62 Z" fill="none" stroke="#6fa8ea" stroke-width="1.4" vector-effect="non-scaling-stroke" stroke-linejoin="round" /></svg>
<svg class="a" style="left:1126px;top:75px;" width="44" height="38" viewBox="0 0 44 38"><path transform="translate(6.00,2.00) scale(0.2700,0.2879)" d="M22 62 C8 62 2 53 2 44 C2 34 10 27 20 28 C22 14 34 4 48 4 C62 4 72 12 76 24 C88 22 98 31 98 43 C98 54 90 62 78 62 Z" fill="none" stroke="#f0a860" stroke-width="1.3" vector-effect="non-scaling-stroke" stroke-linejoin="round" /><path transform="translate(2.00,6.00) scale(0.2700,0.2879)" d="M22 62 C8 62 2 53 2 44 C2 34 10 27 20 28 C22 14 34 4 48 4 C62 4 72 12 76 24 C88 22 98 31 98 43 C98 54 90 62 78 62 Z" fill="none" stroke="#6fa8ea" stroke-width="1.3" vector-effect="non-scaling-stroke" stroke-linejoin="round" /><circle cx="34" cy="30" r="4.6" fill="#f7b26a" stroke="#4a4a4a" stroke-width="1"/></svg>
<svg class="a" style="left:1126px;top:123px;" width="44" height="40" viewBox="0 0 44 40"><path transform="translate(6.00,2.00) scale(0.2700,0.2879)" d="M22 62 C8 62 2 53 2 44 C2 34 10 27 20 28 C22 14 34 4 48 4 C62 4 72 12 76 24 C88 22 98 31 98 43 C98 54 90 62 78 62 Z" fill="none" stroke="#f0a860" stroke-width="1.3" vector-effect="non-scaling-stroke" stroke-linejoin="round" /><path transform="translate(2.00,6.00) scale(0.2700,0.2879)" d="M22 62 C8 62 2 53 2 44 C2 34 10 27 20 28 C22 14 34 4 48 4 C62 4 72 12 76 24 C88 22 98 31 98 43 C98 54 90 62 78 62 Z" fill="none" stroke="#6fa8ea" stroke-width="1.3" vector-effect="non-scaling-stroke" stroke-linejoin="round" /><circle cx="34" cy="30" r="4.6" fill="#5c5c5c" stroke="#c9c9c9" stroke-width="1.4"/></svg>
<div class="a" style="left:1176px;top:75px;width:1px;height:80px;background:#7d7d7d;"></div>
<svg class="a" style="left:1185px;top:75px;" width="44" height="36" viewBox="0 0 44 36"><path transform="translate(1.00,1.00) scale(0.4000,0.3939)" d="M22 62 C8 62 2 53 2 44 C2 34 10 27 20 28 C22 14 34 4 48 4 C62 4 72 12 76 24 C88 22 98 31 98 43 C98 54 90 62 78 62 Z" fill="none" stroke="#c9c9c9" stroke-width="1.3" vector-effect="non-scaling-stroke" stroke-linejoin="round" /><rect x="16" y="22" width="10" height="8" fill="#5c5c5c"/></svg>
<span id="t33" class="t" style="top:82.50px;font-size:21px;line-height:27px;color:#6fa8ea;font-family:'Liberation Sans', sans-serif;font-weight:bold;left:1200.5px;transform-origin:0 50%;">?</span>
<svg class="a" style="left:1185px;top:123px;" width="44" height="36" viewBox="0 0 44 36"><path transform="translate(1.00,1.00) scale(0.4000,0.3939)" d="M22 62 C8 62 2 53 2 44 C2 34 10 27 20 28 C22 14 34 4 48 4 C62 4 72 12 76 24 C88 22 98 31 98 43 C98 54 90 62 78 62 Z" fill="none" stroke="#c9c9c9" stroke-width="1.3" vector-effect="non-scaling-stroke" stroke-linejoin="round" /><rect x="16" y="22" width="10" height="8" fill="#5c5c5c"/></svg>
<span id="t34" class="t" style="top:130.50px;font-size:21px;line-height:27px;color:#6fa8ea;font-family:'Liberation Sans', sans-serif;font-weight:bold;left:1200.5px;transform-origin:0 50%;">?</span>
<svg class="a" style="left:1212px;top:127px;" width="6" height="6" viewBox="0 0 6 6"><rect x="1" y="1" width="3.4" height="3.4" fill="#5c5c5c" stroke="#f0a860" stroke-width="1.1"/></svg>
<svg class="a" style="left:1241px;top:79px;" width="30" height="32" viewBox="0 0 30 32"><defs><linearGradient id="gy1" x1="0" y1="0" x2="1" y2="0"><stop offset="0" stop-color="#f2f2f2"/><stop offset="1" stop-color="#8e8e8e"/></linearGradient></defs><path d="M1 7 V22 Q14 30 27 22 V7 Z" fill="url(#gy1)"/><ellipse cx="14" cy="7" rx="13" ry="5.5" fill="#e6e6e6"/><path d="M14 7.5 H27" stroke="#f0a040" stroke-width="1.6"/></svg>
<svg class="a" style="left:1241px;top:128px;" width="30" height="32" viewBox="0 0 30 32"><defs><linearGradient id="gy2" x1="0" y1="0" x2="1" y2="0"><stop offset="0" stop-color="#f2f2f2"/><stop offset="1" stop-color="#8e8e8e"/></linearGradient></defs><path d="M1 7 V22 Q14 30 27 22 V7 Z" fill="url(#gy2)"/><ellipse cx="14" cy="7" rx="13" ry="5.5" fill="#e6e6e6"/><path d="M1 7.5 H27" stroke="#f0a040" stroke-width="1.6"/></svg>
<span id="t35" class="t" style="top:71.50px;font-size:13px;line-height:17px;color:#f0a860;font-family:'Liberation Sans', sans-serif;font-weight:bold;left:1270.5px;transform-origin:0 50%;">R</span>
<span id="t36" class="t" style="top:125.00px;font-size:13px;line-height:17px;color:#f0a860;font-family:'Liberation Sans', sans-serif;font-weight:bold;left:1270.5px;transform-origin:0 50%;">D</span>
<span id="t37" class="t" style="top:164.10px;font-size:13.8px;line-height:18px;color:#d6d6d6;font-family:'Liberation Sans', sans-serif;left:1293.5px;transform-origin:0 50%;transform:scaleX(0.9630);">Справка</span>
<svg class="a" style="left:1300px;top:78px;" width="40" height="32" viewBox="0 0 40 32"><path d="M1 6 H37 V30 H1 Z" fill="#3b8cf0"/><path d="M4 3 Q12 -1 19 4 V28 Q12 24 4 27 Z" fill="#ffffff"/><path d="M34 3 Q26 -1 19 4 V28 Q26 24 34 27 Z" fill="#f4f4f4"/><path d="M19 4 V28" stroke="#9fb8d8" stroke-width="1"/></svg>
<svg class="a" style="left:1300px;top:128px;" width="40" height="32" viewBox="0 0 40 32"><path d="M1 6 H37 V30 H1 Z" fill="#3b8cf0"/><path d="M4 3 Q12 -1 19 4 V28 Q12 24 4 27 Z" fill="#ffffff"/><path d="M34 3 Q26 -1 19 4 V28 Q26 24 34 27 Z" fill="#f4f4f4"/><path d="M19 4 V28" stroke="#9fb8d8" stroke-width="1"/><circle cx="32" cy="2.5" r="7" fill="#2fc07a"/><path d="M29 -1 Q33 -2 34 1 Q31 3 33 5 Q31 8 29 6 Q31 3 29 -1 Z" fill="#2a6fd6"/></svg>
<div class="a" style="left:0px;top:189px;width:515px;height:741px;background:#5c5c5c;"></div>
<div class="a" style="left:515px;top:189px;width:6px;height:741px;background:#4a4a4a;"></div>
<div class="a" style="left:519px;top:189px;width:2px;height:741px;background:#595959;"></div>
<div class="a" style="left:0px;top:188px;width:515px;height:29px;background:#808080;"></div>
<span id="t38" class="t" style="top:193.50px;font-size:14px;line-height:18px;color:#dedede;font-family:'Liberation Sans', sans-serif;left:2.5px;transform-origin:0 50%;transform:scaleX(0.9344);">Свойства</span>
<svg class="a" style="left:480px;top:196px;" width="12" height="14" viewBox="0 0 12 14"><path d="M3.5 1.5 H8.5 V7 H3.5 Z M6.6 1.5 V7" fill="none" stroke="#f4f4f4" stroke-width="1.3"/><path d="M1.5 7.5 H10.5 M6 7.5 V12.5" stroke="#f4f4f4" stroke-width="1.4"/></svg>
<svg class="a" style="left:498px;top:197px;" width="12" height="12" viewBox="0 0 12 12"><path d="M1.5 1.5 L10.5 10.5 M10.5 1.5 L1.5 10.5" stroke="#f4f4f4" stroke-width="1.7"/></svg>
<div class="a" style="left:0px;top:218px;width:28px;height:28px;background:#4e6889;border:1px solid #5b9bd5;"></div>
<svg class="a" style="left:3px;top:221px;" width="24" height="24" viewBox="0 0 24 24"><path d="M7.5 2 V12 M2.5 7 H12.5" stroke="#6fb0f4" stroke-width="1.3"/><path transform="translate(13.5,9.5) scale(0.95)" d="M0 0 L0 11 L2.6 8.6 L4.6 13 L6.4 12.2 L4.4 7.9 L8 7.9 Z" fill="#ffffff" stroke="#333" stroke-width="0.6"/></svg>
<svg class="a" style="left:34px;top:222px;" width="16" height="18" viewBox="0 0 16 18"><path transform="translate(2.5,2) scale(1.15)" d="M0 0 L0 11 L2.6 8.6 L4.6 13 L6.4 12.2 L4.4 7.9 L8 7.9 Z" fill="#ffffff" stroke="#333" stroke-width="0.6"/></svg>
<div class="a" style="left:59px;top:223px;width:1px;height:19px;background:#3e3e3e;"></div>
<svg class="a" style="left:66px;top:222px;" width="26" height="22" viewBox="0 0 26 22"><rect x="2.5" y="2.5" width="16" height="15" fill="none" stroke="#f0f0f0" stroke-width="1.2" stroke-dasharray="3 2"/><rect x="7" y="16" width="10" height="3" fill="#3c3c3c"/><path transform="translate(16,10) scale(0.9)" d="M0 0 L0 11 L2.6 8.6 L4.6 13 L6.4 12.2 L4.4 7.9 L8 7.9 Z" fill="#ffffff" stroke="#333" stroke-width="0.6"/></svg>
<svg class="a" style="left:94px;top:222px;" width="26" height="22" viewBox="0 0 26 22"><rect x="2.5" y="2.5" width="16" height="15" fill="none" stroke="#f0f0f0" stroke-width="1.2" stroke-dasharray="3 2"/><rect x="6.5" y="6.5" width="8" height="8" fill="#777" stroke="#e0e0e0" stroke-width="1" stroke-dasharray="2 1.5"/><path transform="translate(17,10) scale(0.9)" d="M0 0 L0 11 L2.6 8.6 L4.6 13 L6.4 12.2 L4.4 7.9 L8 7.9 Z" fill="#ffffff" stroke="#333" stroke-width="0.6"/></svg>
<svg class="a" style="left:122px;top:221px;" width="26" height="24" viewBox="0 0 26 24"><path d="M3 9 L10 2 V16 Z" fill="#6fb0f4"/><path d="M12 1 H21 V10 Z" fill="#6fb0f4"/><path d="M1 13 V22 H10 Z" fill="#6fb0f4"/><path transform="translate(15,12) scale(0.9)" d="M0 0 L0 11 L2.6 8.6 L4.6 13 L6.4 12.2 L4.4 7.9 L8 7.9 Z" fill="#ffffff" stroke="#333" stroke-width="0.6"/></svg>
<svg class="a" style="left:151px;top:221px;" width="24" height="24" viewBox="0 0 24 24"><path d="M1 1.5 H18 L11.5 9 V19 L8 16 V9 Z" fill="#6fb0f4"/><path d="M1 1.5 H7 L4 5 Z" fill="#f0a860"/><path d="M16 9 L12.5 15 H15 L13.5 20 L18 13 H15.5 Z" fill="#9a9a9a"/></svg>
<div class="a" style="left:180px;top:223px;width:1px;height:19px;background:#3e3e3e;"></div>
<svg class="a" style="left:187px;top:221px;" width="24" height="24" viewBox="0 0 24 24"><rect x="2.5" y="4.5" width="13" height="13" fill="none" stroke="#4a4a4a" stroke-width="1.2" stroke-dasharray="3 2"/><path d="M10 1 V9 M8 3 L10 0.8 L12 3" stroke="#5f7fa6" stroke-width="1.1" fill="none"/><path transform="translate(15,11) scale(0.85)" d="M0 0 L0 11 L2.6 8.6 L4.6 13 L6.4 12.2 L4.4 7.9 L8 7.9 Z" fill="#8a8a8a" stroke="#4a4a4a" stroke-width="0.6"/></svg>
<svg class="a" style="left:216px;top:222px;" width="24" height="22" viewBox="0 0 24 22"><path d="M2 9 L7 14 L14 2 L7 10 Z" fill="#5f7fa6" stroke="#5f7fa6" stroke-width="1.5"/><path transform="translate(15,10) scale(0.85)" d="M0 0 L0 11 L2.6 8.6 L4.6 13 L6.4 12.2 L4.4 7.9 L8 7.9 Z" fill="#8a8a8a" stroke="#4a4a4a" stroke-width="0.6"/></svg>
<div class="a" style="left:244px;top:223px;width:1px;height:19px;background:#3e3e3e;"></div>
<svg class="a" style="left:252px;top:223px;" width="20" height="18" viewBox="0 0 20 18"><rect x="0.5" y="0.5" width="18" height="16" fill="#6fb0f4"/><path transform="translate(6,2) scale(0.95)" d="M0 0 L0 11 L2.6 8.6 L4.6 13 L6.4 12.2 L4.4 7.9 L8 7.9 Z" fill="#ffffff" stroke="#333" stroke-width="0.6"/></svg>
<svg class="a" style="left:281px;top:222px;" width="20" height="22" viewBox="0 0 20 22"><path d="M2 2 L13 12 M13 2 L2 12" stroke="#f0a860" stroke-width="1.2"/><path transform="translate(11,9) scale(0.8)" d="M0 0 L0 11 L2.6 8.6 L4.6 13 L6.4 12.2 L4.4 7.9 L8 7.9 Z" fill="#ffffff" stroke="#333" stroke-width="0.6"/></svg>
<svg class="a" style="left:309px;top:223px;" width="18" height="18" viewBox="0 0 18 18"><circle cx="9" cy="9" r="8.2" fill="#b8b8b8"/></svg>
<span id="t39" class="t" style="top:224.00px;font-size:13px;line-height:17px;color:#222;font-family:'Liberation Sans', sans-serif;font-weight:bold;left:318px;transform-origin:50% 50%;transform:translateX(-50%) scaleX(1.0000);">?</span>
<div class="a" style="left:1px;top:247px;width:511px;height:1px;background:#4c4c4c;"></div>
<div class="a" style="left:1px;top:248px;width:511px;height:24px;background:#5d5d5d;"></div>
<div class="a" style="left:329px;top:248px;width:1px;height:24px;background:#4c4c4c;"></div>
<span id="t40" class="t" style="top:251.80px;font-size:13.3px;line-height:17px;color:#ececec;font-family:'Liberation Sans', sans-serif;left:8.2px;transform-origin:0 50%;transform:scaleX(0.9182);">Объекты</span>
<span id="t41" class="t" style="top:251.80px;font-size:13.3px;line-height:17px;color:#a9a9a9;font-family:'Liberation Sans', sans-serif;left:333.3px;transform-origin:0 50%;transform:scaleX(0.9352);">Нет набора</span>
<div class="a" style="left:0px;top:272px;width:512px;height:24px;background:#484848;"></div>
<span id="t42" class="t" style="top:275.90px;font-size:13.6px;line-height:18px;color:#ffffff;font-family:'Liberation Sans', sans-serif;font-weight:bold;left:7.4px;transform-origin:0 50%;transform:scaleX(1.0913);">Общие</span>
<div class="a" style="left:491px;top:283px;width:8px;height:2px;background:#f4f4f4;"></div>
<div class="a" style="left:1px;top:296px;width:511px;height:24px;background:#5d5d5d;"></div>
<div class="a" style="left:1px;top:320px;width:511px;height:1px;background:#4c4c4c;"></div>
<div class="a" style="left:329px;top:296px;width:1px;height:25px;background:#4c4c4c;"></div>
<span id="t43" class="t" style="top:299.80px;font-size:13.3px;line-height:17px;color:#ececec;font-family:'Liberation Sans', sans-serif;left:8.2px;transform-origin:0 50%;transform:scaleX(0.8969);">Слой</span>
<div class="a" style="left:1px;top:321px;width:511px;height:24px;background:#5d5d5d;"></div>
<div class="a" style="left:1px;top:345px;width:511px;height:1px;background:#4c4c4c;"></div>
<div class="a" style="left:329px;top:321px;width:1px;height:25px;background:#4c4c4c;"></div>
<span id="t44" class="t" style="top:324.80px;font-size:13.3px;line-height:17px;color:#ececec;font-family:'Liberation Sans', sans-serif;left:8.2px;transform-origin:0 50%;transform:scaleX(0.9367);">Цвет</span>
<span id="t45" class="t" style="top:324.80px;font-size:13.3px;line-height:17px;color:#ececec;font-family:'Liberation Sans', sans-serif;left:352.5px;transform-origin:0 50%;transform:scaleX(0.9132);">По слою</span>
<div class="a" style="left:1px;top:346px;width:511px;height:24px;background:#5d5d5d;"></div>
<div class="a" style="left:1px;top:370px;width:511px;height:1px;background:#4c4c4c;"></div>
<div class="a" style="left:329px;top:346px;width:1px;height:25px;background:#4c4c4c;"></div>
<span id="t46" class="t" style="top:349.80px;font-size:13.3px;line-height:17px;color:#ececec;font-family:'Liberation Sans', sans-serif;left:8.2px;transform-origin:0 50%;transform:scaleX(0.9635);">Тип линий</span>
<span id="t47" class="t" style="top:349.80px;font-size:13.3px;line-height:17px;color:#ececec;font-family:'Liberation Sans', sans-serif;left:409.3px;transform-origin:0 50%;transform:scaleX(0.9170);">По слою</span>
<div class="a" style="left:1px;top:371px;width:511px;height:24px;background:#5d5d5d;"></div>
<div class="a" style="left:1px;top:395px;width:511px;height:1px;background:#4c4c4c;"></div>
<div class="a" style="left:329px;top:371px;width:1px;height:25px;background:#4c4c4c;"></div>
<span id="t48" class="t" style="top:374.80px;font-size:13.3px;line-height:17px;color:#ececec;font-family:'Liberation Sans', sans-serif;left:8.2px;transform-origin:0 50%;transform:scaleX(0.9454);">Масштаб типа линий</span>
<span id="t49" class="t" style="top:374.80px;font-size:13.3px;line-height:17px;color:#ececec;font-family:'Liberation Sans', sans-serif;left:333.3px;transform-origin:0 50%;transform:scaleX(0.9318);">100</span>
<div class="a" style="left:1px;top:396px;width:511px;height:24px;background:#5d5d5d;"></div>
<div class="a" style="left:1px;top:420px;width:511px;height:1px;background:#4c4c4c;"></div>
<div class="a" style="left:329px;top:396px;width:1px;height:25px;background:#4c4c4c;"></div>
<span id="t50" class="t" style="top:399.80px;font-size:13.3px;line-height:17px;color:#ececec;font-family:'Liberation Sans', sans-serif;left:8.2px;transform-origin:0 50%;transform:scaleX(0.9172);">Вес линий</span>
<span id="t51" class="t" style="top:399.80px;font-size:13.3px;line-height:17px;color:#ececec;font-family:'Liberation Sans', sans-serif;left:409.3px;transform-origin:0 50%;transform:scaleX(0.9170);">По слою</span>
<div class="a" style="left:1px;top:421px;width:511px;height:24px;background:#5d5d5d;"></div>
<div class="a" style="left:1px;top:445px;width:511px;height:1px;background:#4c4c4c;"></div>
<div class="a" style="left:329px;top:421px;width:1px;height:25px;background:#4c4c4c;"></div>
<span id="t52" class="t" style="top:424.80px;font-size:13.3px;line-height:17px;color:#ececec;font-family:'Liberation Sans', sans-serif;left:8.2px;transform-origin:0 50%;transform:scaleX(0.9465);">Прозрачность</span>
<span id="t53" class="t" style="top:424.80px;font-size:13.3px;line-height:17px;color:#ececec;font-family:'Liberation Sans', sans-serif;left:333.3px;transform-origin:0 50%;transform:scaleX(0.9189);">По слою</span>
<div class="a" style="left:1px;top:446px;width:511px;height:24px;background:#5d5d5d;"></div>
<div class="a" style="left:329px;top:446px;width:1px;height:24px;background:#4c4c4c;"></div>
<span id="t54" class="t" style="top:449.80px;font-size:13.3px;line-height:17px;color:#ececec;font-family:'Liberation Sans', sans-serif;left:8.2px;transform-origin:0 50%;transform:scaleX(0.9727);">Толщина</span>
<span id="t55" class="t" style="top:449.80px;font-size:13.3px;line-height:17px;color:#ececec;font-family:'Liberation Sans', sans-serif;left:333.3px;transform-origin:0 50%;transform:scaleX(0.9000);">0</span>
<div class="a" style="left:0px;top:470px;width:512px;height:24px;background:#484848;"></div>
<span id="t56" class="t" style="top:473.90px;font-size:13.6px;line-height:18px;color:#ffffff;font-family:'Liberation Sans', sans-serif;font-weight:bold;left:7.4px;transform-origin:0 50%;transform:scaleX(1.0526);">3D-визуализация</span>
<div class="a" style="left:491px;top:481px;width:8px;height:2px;background:#f4f4f4;"></div>
<div class="a" style="left:1px;top:494px;width:511px;height:24px;background:#5d5d5d;"></div>
<div class="a" style="left:329px;top:494px;width:1px;height:24px;background:#4c4c4c;"></div>
<span id="t57" class="t" style="top:497.80px;font-size:13.3px;line-height:17px;color:#ececec;font-family:'Liberation Sans', sans-serif;left:8.2px;transform-origin:0 50%;transform:scaleX(0.9290);">Материал</span>
<span id="t58" class="t" style="top:497.80px;font-size:13.3px;line-height:17px;color:#ececec;font-family:'Liberation Sans', sans-serif;left:333.3px;transform-origin:0 50%;transform:scaleX(0.9189);">По слою</span>
<div class="a" style="left:0px;top:518px;width:512px;height:24px;background:#484848;"></div>
<span id="t59" class="t" style="top:521.90px;font-size:13.6px;line-height:18px;color:#ffffff;font-family:'Liberation Sans', sans-serif;font-weight:bold;left:7.4px;transform-origin:0 50%;transform:scaleX(0.9738);">Стили</span>
<div class="a" style="left:491px;top:529px;width:8px;height:2px;background:#f4f4f4;"></div>
<div class="a" style="left:1px;top:542px;width:511px;height:24px;background:#5d5d5d;"></div>
<div class="a" style="left:1px;top:566px;width:511px;height:1px;background:#4c4c4c;"></div>
<div class="a" style="left:329px;top:542px;width:1px;height:25px;background:#4c4c4c;"></div>
<span id="t60" class="t" style="top:545.80px;font-size:13.3px;line-height:17px;color:#ececec;font-family:'Liberation Sans', sans-serif;left:8.2px;transform-origin:0 50%;transform:scaleX(0.9444);">Стиль текста</span>
<span id="t61" class="t" style="top:545.80px;font-size:13.3px;line-height:17px;color:#ececec;font-family:'Liberation Sans', sans-serif;left:333.3px;transform-origin:0 50%;transform:scaleX(0.9507);">ГОСТ 2.304</span>
<div class="a" style="left:1px;top:567px;width:511px;height:24px;background:#5d5d5d;"></div>
<div class="a" style="left:329px;top:567px;width:1px;height:24px;background:#4c4c4c;"></div>
<span id="t62" class="t" style="top:570.80px;font-size:13.3px;line-height:17px;color:#ececec;font-family:'Liberation Sans', sans-serif;left:8.2px;transform-origin:0 50%;transform:scaleX(0.9303);">Размерный стиль</span>
<span id="t63" class="t" style="top:570.80px;font-size:13.3px;line-height:17px;color:#ececec;font-family:'Liberation Sans', sans-serif;left:333.3px;transform-origin:0 50%;transform:scaleX(0.8711);">СПДС</span>
<div class="a" style="left:0px;top:591px;width:512px;height:24px;background:#484848;"></div>
<span id="t64" class="t" style="top:594.90px;font-size:13.6px;line-height:18px;color:#ffffff;font-family:'Liberation Sans', sans-serif;font-weight:bold;left:7.4px;transform-origin:0 50%;transform:scaleX(0.9978);">Стиль печати</span>
<div class="a" style="left:491px;top:602px;width:8px;height:2px;background:#f4f4f4;"></div>
<div class="a" style="left:1px;top:615px;width:511px;height:24px;background:#5d5d5d;"></div>
<div class="a" style="left:1px;top:639px;width:511px;height:1px;background:#4c4c4c;"></div>
<div class="a" style="left:329px;top:615px;width:1px;height:25px;background:#4c4c4c;"></div>
<span id="t65" class="t" style="top:618.80px;font-size:13.3px;line-height:17px;color:#ececec;font-family:'Liberation Sans', sans-serif;left:8.2px;transform-origin:0 50%;transform:scaleX(0.9614);">Стиль печати</span>
<span id="t66" class="t" style="top:618.80px;font-size:13.3px;line-height:17px;color:#a9a9a9;font-family:'Liberation Sans', sans-serif;left:333.3px;transform-origin:0 50%;transform:scaleX(0.9400);">По цвету</span>
<div class="a" style="left:1px;top:640px;width:511px;height:24px;background:#5d5d5d;"></div>
<div class="a" style="left:1px;top:664px;width:511px;height:1px;background:#4c4c4c;"></div>
<div class="a" style="left:329px;top:640px;width:1px;height:25px;background:#4c4c4c;"></div>
<span id="t67" class="t" style="top:643.80px;font-size:13.3px;line-height:17px;color:#ececec;font-family:'Liberation Sans', sans-serif;left:8.2px;transform-origin:0 50%;transform:scaleX(0.9618);">Таблица стилей печати</span>
<span id="t68" class="t" style="top:643.80px;font-size:13.3px;line-height:17px;color:#ececec;font-family:'Liberation Sans', sans-serif;left:333.3px;transform-origin:0 50%;transform:scaleX(0.8913);">Нет</span>
<div class="a" style="left:1px;top:665px;width:511px;height:24px;background:#5d5d5d;"></div>
<div class="a" style="left:1px;top:689px;width:511px;height:1px;background:#4c4c4c;"></div>
<div class="a" style="left:329px;top:665px;width:1px;height:25px;background:#4c4c4c;"></div>
<span id="t69" class="t" style="top:668.80px;font-size:13.3px;line-height:17px;color:#ececec;font-family:'Liberation Sans', sans-serif;left:8.2px;transform-origin:0 50%;transform:scaleX(0.9523);">Пространство таблицы стилей печати</span>
<span id="t70" class="t" style="top:668.80px;font-size:13.3px;line-height:17px;color:#a9a9a9;font-family:'Liberation Sans', sans-serif;left:333.3px;transform-origin:0 50%;transform:scaleX(0.9292);">Модель</span>
<div class="a" style="left:1px;top:690px;width:511px;height:24px;background:#5d5d5d;"></div>
<div class="a" style="left:329px;top:690px;width:1px;height:24px;background:#4c4c4c;"></div>
<span id="t71" class="t" style="top:693.80px;font-size:13.3px;line-height:17px;color:#ececec;font-family:'Liberation Sans', sans-serif;left:8.2px;transform-origin:0 50%;transform:scaleX(0.9711);">Тип стилей печати</span>
<span id="t72" class="t" style="top:693.80px;font-size:13.3px;line-height:17px;color:#a9a9a9;font-family:'Liberation Sans', sans-serif;left:333.3px;transform-origin:0 50%;transform:scaleX(0.9247);">Недоступно</span>
<div class="a" style="left:0px;top:714px;width:512px;height:24px;background:#484848;"></div>
<span id="t73" class="t" style="top:717.90px;font-size:13.6px;line-height:18px;color:#ffffff;font-family:'Liberation Sans', sans-serif;font-weight:bold;left:7.4px;transform-origin:0 50%;transform:scaleX(1.0681);">Разное</span>
<div class="a" style="left:491px;top:725px;width:8px;height:2px;background:#f4f4f4;"></div>
<div class="a" style="left:1px;top:738px;width:511px;height:24px;background:#5d5d5d;"></div>
<div class="a" style="left:1px;top:762px;width:511px;height:1px;background:#4c4c4c;"></div>
<div class="a" style="left:329px;top:738px;width:1px;height:25px;background:#4c4c4c;"></div>
<span id="t74" class="t" style="top:741.80px;font-size:13.3px;line-height:17px;color:#ececec;font-family:'Liberation Sans', sans-serif;left:8.2px;transform-origin:0 50%;transform:scaleX(0.9129);">Знак ПСК Вкл</span>
<span id="t75" class="t" style="top:741.80px;font-size:13.3px;line-height:17px;color:#ececec;font-family:'Liberation Sans', sans-serif;left:333.3px;transform-origin:0 50%;transform:scaleX(0.9750);">Да</span>
<div class="a" style="left:1px;top:763px;width:511px;height:24px;background:#5d5d5d;"></div>
<div class="a" style="left:1px;top:787px;width:511px;height:1px;background:#4c4c4c;"></div>
<div class="a" style="left:329px;top:763px;width:1px;height:25px;background:#4c4c4c;"></div>
<span id="t76" class="t" style="top:766.80px;font-size:13.3px;line-height:17px;color:#ececec;font-family:'Liberation Sans', sans-serif;left:8.2px;transform-origin:0 50%;transform:scaleX(0.9497);">Знак ПСК в начале координат</span>
<span id="t77" class="t" style="top:766.80px;font-size:13.3px;line-height:17px;color:#ececec;font-family:'Liberation Sans', sans-serif;left:333.3px;transform-origin:0 50%;transform:scaleX(0.9750);">Да</span>
<div class="a" style="left:1px;top:788px;width:511px;height:24px;background:#5d5d5d;"></div>
<div class="a" style="left:1px;top:812px;width:511px;height:1px;background:#4c4c4c;"></div>
<div class="a" style="left:329px;top:788px;width:1px;height:25px;background:#4c4c4c;"></div>
<span id="t78" class="t" style="top:791.80px;font-size:13.3px;line-height:17px;color:#ececec;font-family:'Liberation Sans', sans-serif;left:8.2px;transform-origin:0 50%;transform:scaleX(0.9288);">ПСК в каждом ВЭкране</span>
<span id="t79" class="t" style="top:791.80px;font-size:13.3px;line-height:17px;color:#ececec;font-family:'Liberation Sans', sans-serif;left:333.3px;transform-origin:0 50%;transform:scaleX(0.9750);">Да</span>
<div class="a" style="left:1px;top:813px;width:511px;height:24px;background:#5d5d5d;"></div>
<div class="a" style="left:1px;top:837px;width:511px;height:1px;background:#4c4c4c;"></div>
<div class="a" style="left:329px;top:813px;width:1px;height:25px;background:#4c4c4c;"></div>
<span id="t80" class="t" style="top:816.80px;font-size:13.3px;line-height:17px;color:#ececec;font-family:'Liberation Sans', sans-serif;left:8.2px;transform-origin:0 50%;transform:scaleX(0.8807);">Имя ПСК</span>
<span id="t81" class="t" style="top:816.80px;font-size:13.3px;line-height:17px;color:#ececec;font-family:'Liberation Sans', sans-serif;left:333.3px;transform-origin:0 50%;transform:scaleX(0.9342);">Мировая СК</span>
<div class="a" style="left:1px;top:838px;width:511px;height:24px;background:#5d5d5d;"></div>
<div class="a" style="left:1px;top:862px;width:511px;height:1px;background:#4c4c4c;"></div>
<div class="a" style="left:329px;top:838px;width:1px;height:25px;background:#4c4c4c;"></div>
<span id="t82" class="t" style="top:841.80px;font-size:13.3px;line-height:17px;color:#ececec;font-family:'Liberation Sans', sans-serif;left:8.2px;transform-origin:0 50%;transform:scaleX(0.9316);">Визуальный стиль</span>
<span id="t83" class="t" style="top:841.80px;font-size:13.3px;line-height:17px;color:#ececec;font-family:'Liberation Sans', sans-serif;left:333.3px;transform-origin:0 50%;transform:scaleX(0.9302);">Каркас</span>
<svg class="a" style="left:334px;top:298px;" width="112" height="22" viewBox="0 0 112 22"><circle cx="9" cy="8.5" r="6.5" fill="#f4ae6a"/><path d="M5.5 12 H12.5 L11.5 15 H6.5 Z" fill="#f4ae6a"/><rect x="6.3" y="14.5" width="5.4" height="4" fill="#b89a66"/>
    <g stroke="#767676" stroke-width="1.2"><path d="M30 5 V16 M24.5 10.5 H35.5 M26 6.5 L34 14.5 M34 6.5 L26 14.5"/></g>
    <path d="M44 8.5 H60.5 V19.5 H44 Z" fill="#6f6f6f" stroke="#505050" stroke-width="0.8"/><path d="M52.5 8.5 V5 Q52.5 1.5 55.8 1.5 Q59 1.5 59 5" fill="none" stroke="#6f6f6f" stroke-width="1.8"/>
    <path d="M69 1.5 H80.5 V7 H83.5 V18 H66 V7 H69 Z" fill="#6f6f6f" stroke="#505050" stroke-width="0.8"/>
    <rect x="88" y="5.2" width="11" height="10.8" fill="#000"/><path d="M89 6.5 L97.8 15 H89 Z" fill="#fff"/></svg>
<span id="t84" class="t" style="top:299.80px;font-size:13.3px;line-height:17px;color:#ececec;font-family:'Liberation Sans', sans-serif;left:436.6px;transform-origin:0 50%;transform:scaleX(0.8571);">0</span>
<svg class="a" style="left:334px;top:326px;" width="16" height="16" viewBox="0 0 16 16"><rect x="1" y="1" width="13.5" height="13" fill="#000"/><path d="M2 2.5 L13 13 H2 Z" fill="#fff"/></svg>
<div class="a" style="left:335px;top:357.5px;width:72px;height:1.2px;background:#f0f0f0;"></div>
<div class="a" style="left:335px;top:407.5px;width:72px;height:1.2px;background:#f0f0f0;"></div>
<div class="a" style="left:521px;top:188px;width:1397px;height:29px;background:#4a4a4a;"></div>
<div class="a" style="left:521px;top:190px;width:196px;height:1px;background:#6a6a6a;"></div>
<div class="a" style="left:521px;top:190px;width:1px;height:26px;background:#6a6a6a;"></div>
<div class="a" style="left:522px;top:191px;width:97px;height:24px;background:#4b4b4b;"></div>
<div class="a" style="left:521px;top:215px;width:98px;height:1px;background:#6a6a6a;"></div>
<div class="a" style="left:619px;top:190px;width:98px;height:26px;background:#808080;"></div>
<span id="t85" class="t" style="top:195.30px;font-size:13.8px;line-height:18px;color:#c6c6c6;font-family:'Liberation Sans', sans-serif;left:549.3px;transform-origin:0 50%;transform:scaleX(0.9521);">Балка.dwg*</span>
<span id="t86" class="t" style="top:195.30px;font-size:13.8px;line-height:18px;color:#f4f4f4;font-family:'Liberation Sans', sans-serif;left:648.5px;transform-origin:0 50%;transform:scaleX(0.9091);">Башня.dwg*</span>
<div class="a" style="left:521px;top:216px;width:1397px;height:2px;background:#5c5c5c;"></div>
<svg class="a" style="left:1899px;top:200px;" width="12" height="8" viewBox="0 0 12 8"><path d="M0.5 0.5 H11.5 L6 6.5 Z" fill="#f0f0f0"/></svg>
<div class="a" style="left:521px;top:217px;width:1397px;height:682px;background:#4a4a4a;"></div>
<div class="a" style="left:522px;top:218px;width:696px;height:680px;background:#2b2b2b;border:2px solid #e0e0e0;"></div>
<div class="a" style="left:1219px;top:218px;width:697px;height:340px;background:#2a2c2f;border:1px solid #5e5e5e;"></div>
<div class="a" style="left:1219px;top:559px;width:697px;height:339px;background:#2a2c2f;border:1px solid #5e5e5e;"></div>
<svg class="a" style="left:523px;top:220px;overflow:hidden;" width="693" height="676" viewBox="523 220 693 676"><g filter="url(#spk)"><path d="M716 838 L790 828 L890 812 L1000 806 L1216 802 V866 L920 867 L795 862 Z" fill="#66665c"/><path d="M880 806 L1020 800 L1120 806 L1120 846 L880 846 Z" fill="#4c4c4a"/><path d="M730 852 L900 850 L1216 846 V866 L920 867 L795 862 Z" fill="#3e455a"/><path d="M716 838 L800 830 L880 838 L860 850 L780 852 Z" fill="#86935f"/><path d="M1120 822 L1216 816 V848 L1120 850 Z" fill="#8f8272"/><path d="M1176 850 H1216 V860 H1182 Z" fill="#f0f0e8"/><path d="M880 848 L1010 846 L1010 862 L885 862 Z" fill="#a8a8a0"/><path d="M862 836 L905 832 L905 846 L868 848 Z" fill="#c8c8c0"/><path d="M876 812 Q884 790 905 782 Q930 772 950 784 Q965 772 985 780 Q1005 784 1018 800 L1020 812 Z" fill="#4e4a46"/><path d="M800 828 Q794 760 800 722 Q808 696 830 694 Q862 696 872 732 Q884 780 876 826 Z" fill="#3f382e"/><path d="M800 742 Q798 710 816 698 Q836 690 842 716 Q838 742 820 752 Z" fill="#cfcabc"/><path d="M838 742 Q834 700 836 690 L864 690 Q868 715 862 744 Z" fill="#5e665e"/><path d="M836 700 Q832 670 842 658 Q850 650 858 660 Q868 684 864 704 Z" fill="#a9bbb3"/><path d="M1166 824 Q1160 782 1176 752 Q1196 724 1216 724 V826 Z" fill="#8a6a50"/><path d="M1196 760 Q1200 735 1216 728 V766 Z" fill="#b9c0bc"/></g><g filter="url(#spk2)"><path d="M1052 390 L1078 390 L1083.5 560 L1075 700 L1062 700 L1052.5 560 Z" fill="#5e5246"/><path d="M1051.0 390.0 L1052.0 540.0 L1042.0 802.0 M1079.0 390.0 L1084.2 540.0 L1099.3 802.0" stroke="#b0a792" stroke-width="3.00" fill="none"/><path d="M1057.2 390.0 L1059.1 540.0 L1054.6 802.0" stroke="#b0a792" stroke-width="2.40" fill="none"/><path d="M1065.6 390.0 L1068.7 540.0 L1071.8 802.0" stroke="#6e675c" stroke-width="4.40" fill="none"/><path d="M1051.0 392.0 H1079.1 M1051.2 414.0 H1079.8 M1051.3 437.0 H1080.6 M1051.5 461.0 H1081.5 M1051.6 486.0 H1082.3 M1051.8 516.0 H1083.4 M1051.7 548.0 H1084.7 M1050.4 581.0 H1086.6 M1049.2 614.0 H1088.5 M1047.9 647.0 H1090.4 M1046.7 680.0 H1092.3 M1045.2 718.0 H1094.5 M1043.6 760.0 H1096.9 " stroke="#b0a792" stroke-width="2.00" fill="none"/><path d="M1057.2 392.0 L1079.8 414.0 M1079.1 392.0 L1057.5 414.0 M1057.5 414.0 L1080.6 437.0 M1079.8 414.0 L1057.8 437.0 M1057.8 437.0 L1081.5 461.0 M1080.6 437.0 L1058.1 461.0 M1058.1 461.0 L1082.3 486.0 M1081.5 461.0 L1058.4 486.0 M1058.4 486.0 L1083.4 516.0 M1082.3 486.0 L1058.8 516.0 M1058.8 516.0 L1084.7 548.0 M1083.4 516.0 L1058.9 548.0 M1058.9 548.0 L1086.6 581.0 M1084.7 548.0 L1058.4 581.0 M1058.4 581.0 L1088.5 614.0 M1086.6 581.0 L1057.8 614.0 M1057.8 614.0 L1090.4 647.0 M1088.5 614.0 L1057.3 647.0 M1057.3 647.0 L1092.3 680.0 M1090.4 647.0 L1056.7 680.0 M1056.7 680.0 L1094.5 718.0 M1092.3 680.0 L1056.0 718.0 M1056.0 718.0 L1096.9 760.0 M1094.5 718.0 L1055.3 760.0 M1055.3 760.0 L1099.3 802.0 M1096.9 760.0 L1054.6 802.0 " stroke="#b0a792" stroke-width="2.00" fill="none"/><path d="M1051.0 392.0 L1057.5 414.0 M1057.2 392.0 L1051.2 414.0 M1051.2 414.0 L1057.8 437.0 M1057.5 414.0 L1051.3 437.0 M1051.3 437.0 L1058.1 461.0 M1057.8 437.0 L1051.5 461.0 M1051.5 461.0 L1058.4 486.0 M1058.1 461.0 L1051.6 486.0 M1051.6 486.0 L1058.8 516.0 M1058.4 486.0 L1051.8 516.0 M1051.8 516.0 L1058.9 548.0 M1058.8 516.0 L1051.7 548.0 M1051.7 548.0 L1058.4 581.0 M1058.9 548.0 L1050.4 581.0 M1050.4 581.0 L1057.8 614.0 M1058.4 581.0 L1049.2 614.0 M1049.2 614.0 L1057.3 647.0 M1057.8 614.0 L1047.9 647.0 M1047.9 647.0 L1056.7 680.0 M1057.3 647.0 L1046.7 680.0 M1046.7 680.0 L1056.0 718.0 M1056.7 680.0 L1045.2 718.0 M1045.2 718.0 L1055.3 760.0 M1056.0 718.0 L1043.6 760.0 M1043.6 760.0 L1054.6 802.0 M1055.3 760.0 L1042.0 802.0 " stroke="#8a8374" stroke-width="1.60" fill="none"/><rect x="1050" y="376" width="33" height="15" fill="#8a7f70"/><rect x="1041" y="353" width="7" height="33" fill="#d2ccbc"/><rect x="1047" y="362" width="5" height="22" fill="#a89f8e"/><rect x="1067" y="353" width="10" height="32" fill="#d8d2c0"/><rect x="1079" y="364" width="5" height="22" fill="#a8a090"/><rect x="1059" y="366" width="7" height="12" fill="#8f8676"/><rect x="1054.3" y="329" width="2" height="46" fill="#cfcabd"/><rect x="1048.5" y="420" width="5.5" height="46" fill="#c4beae"/><rect x="1080" y="420" width="6" height="46" fill="#bcb6a6"/><rect x="1058" y="430" width="5" height="34" fill="#d2ccbc"/><path d="M1017 814 L1019 802 L1112 802 L1112 814 Z" fill="#7c7a5c"/><path d="M1030 803 Q1032 788 1048 786 L1066 788 L1068 803 Z" fill="#dcdcd4"/></g></svg>
<svg class="a" style="left:0px;top:0px;pointer-events:none;" width="1918" height="1080" viewBox="0 0 1918 1080"><path d="M1135.5 742 V670" stroke="#0000e6" stroke-width="2" fill="none"/><path d="M1135.5 646 L1142.5 671 H1128.5 Z" stroke="#0000e6" stroke-width="1.6" fill="none"/><path d="M1135 743.5 H1063" stroke="#00e000" stroke-width="2" fill="none"/><path d="M1038.5 743.5 L1063.5 736.8 V750.2 Z" stroke="#00e000" stroke-width="1.6" fill="none"/><path d="M1129.5 737.5 L1141.5 749.5 M1141.5 737.5 L1129.5 749.5 M1127 743.5 H1144" stroke="#f4f4f4" stroke-width="1.3"/><path d="M1135.5 738 V750" stroke="#e00000" stroke-width="1.4"/><path d="M1060 785.5 H1025" stroke="#e00000" stroke-width="1.4"/><path d="M1016.5 785.5 L1025 782.3 V788.7 Z" stroke="#e00000" stroke-width="1.2" fill="none"/><path d="M1129.8 621 H1141.8 L1129.8 633.5 H1142" stroke="#f0f0f0" stroke-width="1.3" fill="none"/><path d="M1013.3 737.5 L1019.3 744 L1025.5 737.5 M1019.3 744 V750.5" stroke="#f0f0f0" stroke-width="1.3" fill="none"/></svg>
<div class="a" style="left:529px;top:223px;width:32px;height:21px;background:#464646;border-radius:4px;"></div>
<span id="t87" class="t" style="top:224.50px;font-size:14px;line-height:18px;color:#a9a9a9;font-family:'Liberation Sans', sans-serif;left:545.0px;transform-origin:50% 50%;transform:translateX(-50%) scaleX(1.0000);">+</span>
<div class="a" style="left:563.5px;top:223px;width:58.5px;height:21px;background:#464646;border-radius:4px;"></div>
<span id="t88" class="t" style="top:225.10px;font-size:13.8px;line-height:18px;color:#a9a9a9;font-family:'Liberation Sans', sans-serif;left:575.2px;transform-origin:0 50%;transform:scaleX(0.8537);">Слева</span>
<div class="a" style="left:624px;top:223px;width:62px;height:21px;background:#464646;border-radius:4px;"></div>
<span id="t89" class="t" style="top:225.10px;font-size:13.8px;line-height:18px;color:#a9a9a9;font-family:'Liberation Sans', sans-serif;left:636.3px;transform-origin:0 50%;transform:scaleX(0.9341);">Каркас</span>
<svg class="a" style="left:1060.7px;top:229.3px;" width="147.0" height="147.0" viewBox="0 0 147.0 147.0"><g fill="none" stroke="#787878" stroke-width="1"><circle cx="73.5" cy="73.5" r="69.5"/><circle cx="73.5" cy="73.5" r="46"/><path d="M2.0 73.5 H145.0 M73.5 2.0 V145.0"/></g><circle cx="27.0" cy="73.5" r="4.6" fill="#a0714c"/></svg>
<div class="a" style="left:1105px;top:369px;width:59px;height:19px;background:#464646;border-radius:3px;"></div>
<span id="t90" class="t" style="top:369.70px;font-size:13.6px;line-height:18px;color:#a9a9a9;font-family:'Liberation Sans', sans-serif;left:1117px;transform-origin:0 50%;transform:scaleX(0.8500);">Слева</span>
<div class="a" style="left:1226.5px;top:224px;width:31.0px;height:19px;background:#464646;border-radius:4px;"></div>
<span id="t91" class="t" style="top:224.50px;font-size:14px;line-height:18px;color:#a9a9a9;font-family:'Liberation Sans', sans-serif;left:1242.0px;transform-origin:50% 50%;transform:translateX(-50%) scaleX(1.0000);">+</span>
<div class="a" style="left:1260.5px;top:224px;width:58.0px;height:19px;background:#464646;border-radius:4px;"></div>
<span id="t92" class="t" style="top:225.10px;font-size:13.8px;line-height:18px;color:#a9a9a9;font-family:'Liberation Sans', sans-serif;left:1272px;transform-origin:0 50%;transform:scaleX(0.8537);">Слева</span>
<div class="a" style="left:1321.5px;top:224px;width:64.0px;height:19px;background:#464646;border-radius:4px;"></div>
<span id="t93" class="t" style="top:225.10px;font-size:13.8px;line-height:18px;color:#a9a9a9;font-family:'Liberation Sans', sans-serif;left:1333.3px;transform-origin:0 50%;transform:scaleX(0.9318);">Каркас</span>
<div class="a" style="left:1388.5px;top:224px;width:185.0px;height:19px;background:#464646;border-radius:4px;"></div>
<span id="t94" class="t" style="top:225.10px;font-size:13.8px;line-height:18px;color:#a9a9a9;font-family:'Liberation Sans', sans-serif;left:1399.4px;transform-origin:0 50%;transform:scaleX(0.9594);">--- нет связанных видов ---</span>
<svg class="a" style="left:1835.3999999999999px;top:223.5px;" width="74.4" height="74.4" viewBox="0 0 74.4 74.4"><g fill="none" stroke="#666666" stroke-width="1"><circle cx="37.2" cy="37.2" r="33.2"/><circle cx="37.2" cy="37.2" r="21.2"/><path d="M2.0 37.2 H72.4 M37.2 2.0 V72.4"/></g><circle cx="15.800000000000004" cy="37.2" r="2.2" fill="#8a6242"/></svg>
<div class="a" style="left:1843.5px;top:284px;width:58.5px;height:19px;background:#464646;border-radius:3px;"></div>
<span id="t95" class="t" style="top:284.90px;font-size:13.6px;line-height:18px;color:#a9a9a9;font-family:'Liberation Sans', sans-serif;left:1855.3px;transform-origin:0 50%;transform:scaleX(0.8675);">Слева</span>
<svg class="a" style="left:0px;top:0px;pointer-events:none;" width="1918" height="1080" viewBox="0 0 1918 1080"><g filter="url(#spk2)"><path d="M1555 274 L1575.5 274 L1578.5 420 L1574 470 L1561 470 L1555.5 420 Z" fill="#5e5246"/><path d="M1554.0 274.0 L1555.0 420.0 L1551.5 519.0 M1576.0 274.0 L1579.0 420.0 L1586.5 519.0" stroke="#b0a792" stroke-width="2.03" fill="none"/><path d="M1558.8 274.0 L1560.3 420.0 L1559.2 519.0" stroke="#b0a792" stroke-width="1.62" fill="none"/><path d="M1565.4 274.0 L1567.5 420.0 L1569.7 519.0" stroke="#6e675c" stroke-width="2.97" fill="none"/><path d="M1554.0 276.0 H1576.0 M1554.1 290.0 H1576.3 M1554.2 305.0 H1576.6 M1554.3 320.0 H1576.9 M1554.4 336.0 H1577.3 M1554.5 352.0 H1577.6 M1554.7 369.0 H1578.0 M1554.8 387.0 H1578.3 M1554.9 406.0 H1578.7 M1554.8 426.0 H1579.5 M1554.0 447.0 H1581.0 M1553.2 470.0 H1582.8 M1552.4 494.0 H1584.6 " stroke="#b0a792" stroke-width="1.35" fill="none"/><path d="M1558.9 276.0 L1576.3 290.0 M1576.0 276.0 L1559.0 290.0 M1559.0 290.0 L1576.6 305.0 M1576.3 290.0 L1559.1 305.0 M1559.1 305.0 L1576.9 320.0 M1576.6 305.0 L1559.3 320.0 M1559.3 320.0 L1577.3 336.0 M1576.9 320.0 L1559.5 336.0 M1559.5 336.0 L1577.6 352.0 M1577.3 336.0 L1559.6 352.0 M1559.6 352.0 L1578.0 369.0 M1577.6 352.0 L1559.8 369.0 M1559.8 369.0 L1578.3 387.0 M1578.0 369.0 L1560.0 387.0 M1560.0 387.0 L1578.7 406.0 M1578.3 387.0 L1560.1 406.0 M1560.1 406.0 L1579.5 426.0 M1578.7 406.0 L1560.2 426.0 M1560.2 426.0 L1581.0 447.0 M1579.5 426.0 L1560.0 447.0 M1560.0 447.0 L1582.8 470.0 M1581.0 447.0 L1559.7 470.0 M1559.7 470.0 L1584.6 494.0 M1582.8 470.0 L1559.5 494.0 M1559.5 494.0 L1586.5 519.0 M1584.6 494.0 L1559.2 519.0 " stroke="#b0a792" stroke-width="1.35" fill="none"/><path d="M1554.0 276.0 L1559.0 290.0 M1558.9 276.0 L1554.1 290.0 M1554.1 290.0 L1559.1 305.0 M1559.0 290.0 L1554.2 305.0 M1554.2 305.0 L1559.3 320.0 M1559.1 305.0 L1554.3 320.0 M1554.3 320.0 L1559.5 336.0 M1559.3 320.0 L1554.4 336.0 M1554.4 336.0 L1559.6 352.0 M1559.5 336.0 L1554.5 352.0 M1554.5 352.0 L1559.8 369.0 M1559.6 352.0 L1554.7 369.0 M1554.7 369.0 L1560.0 387.0 M1559.8 369.0 L1554.8 387.0 M1554.8 387.0 L1560.1 406.0 M1560.0 387.0 L1554.9 406.0 M1554.9 406.0 L1560.2 426.0 M1560.1 406.0 L1554.8 426.0 M1554.8 426.0 L1560.0 447.0 M1560.2 426.0 L1554.0 447.0 M1554.0 447.0 L1559.7 470.0 M1560.0 447.0 L1553.2 470.0 M1553.2 470.0 L1559.5 494.0 M1559.7 470.0 L1552.4 494.0 M1552.4 494.0 L1559.2 519.0 M1559.5 494.0 L1551.5 519.0 " stroke="#8a8374" stroke-width="1.08" fill="none"/><rect x="1551" y="262" width="25" height="12" fill="#8a7f70"/><rect x="1549.6" y="250" width="5" height="22" fill="#d2ccbc"/><rect x="1566" y="250" width="7" height="22" fill="#d8d2c0"/><rect x="1573.5" y="256" width="4" height="16" fill="#a8a090"/><rect x="1558" y="235" width="1.6" height="30" fill="#cfcabd"/><rect x="1553" y="292" width="4" height="26" fill="#d5d0c4"/><rect x="1574" y="292" width="4" height="26" fill="#d5d0c4"/></g><g filter="url(#spk4)"><rect x="1532.5" y="524" width="79" height="33" fill="#3e4558"/><rect x="1532.5" y="519" width="79" height="6" fill="#a9a994"/><rect x="1536" y="504" width="40" height="14" fill="#b9b7ad"/></g><path d="M1607.6 484 V449" stroke="#0000e6" stroke-width="1.8"/><path d="M1607.6 436 L1611.3 449 H1603.9 Z" stroke="#0000e6" stroke-width="1.2" fill="none"/><path d="M1607 484.7 H1572" stroke="#00e000" stroke-width="1.8"/><path d="M1558.8 484.7 L1571.8 481 V488.4 Z" stroke="#00e000" stroke-width="1.2" fill="none"/><path d="M1601.5 478.5 L1613.7 490.8 M1613.7 478.5 L1601.5 490.8" stroke="#f4f4f4" stroke-width="1.4"/><path d="M1607.6 481 V488" stroke="#e00000" stroke-width="1.2"/><path d="M1562.5 509.8 H1540" stroke="#e00000" stroke-width="1.4"/><path d="M1534.8 509.8 L1541 507 V512.6 Z" fill="#e00000"/><path d="M1601.5 420 H1613.8 L1601.5 432 H1614" stroke="#f0f0f0" stroke-width="1.3" fill="none"/><path d="M1543.2 478.8 L1548.3 485 L1553.4 478.8 M1548.3 485 V491.3" stroke="#f0f0f0" stroke-width="1.3" fill="none"/></svg>
<svg class="a" style="left:0px;top:0px;pointer-events:none;" width="1918" height="1080" viewBox="0 0 1918 1080"><path d="M1220 761.5 H1607" stroke="#3a3e48" stroke-width="1"/><path d="M1668 761.5 H1915" stroke="#8a1c1c" stroke-width="1"/><path d="M1607.6 700 V897" stroke="#3a3e48" stroke-width="1"/><path d="M1607.6 560 V693" stroke="#14a014" stroke-width="1"/><path d="M1594.4 560 V751.5" stroke="#00dc00" stroke-width="1.4"/><path d="M1594 751.5 H1335.5" stroke="#e80000" stroke-width="2"/><path d="M1286.5 751.5 L1335.5 727.3 V775.8 Z" stroke="#e80000" stroke-width="1.8" fill="none"/><g filter="url(#spk3)"><path d="M1501 655 L1710 716" stroke="#a39f92" stroke-width="9" fill="none" stroke-linecap="round"/><path d="M1710 716 L1554 864" stroke="#a39f92" stroke-width="8.5" fill="none" stroke-linecap="round"/><path d="M1554 864 L1501 655" stroke="#aaa391" stroke-width="6.5" fill="none" stroke-linecap="round"/><ellipse cx="1603.5" cy="761" rx="30" ry="10.5" transform="rotate(-40 1603.5 761)" fill="#6e5c52"/><circle cx="1503" cy="657" r="7" fill="#b9a37a"/><circle cx="1708" cy="717" r="7.5" fill="#8f8a82"/><circle cx="1555" cy="862" r="7" fill="#b9a37a"/></g><g stroke="#f4f4f4" stroke-width="1.2" fill="none"><rect x="1603" y="756.5" width="9" height="9"/><path d="M1603 761 H1612 M1607.6 756.5 V765.5"/><path d="M1612 761 H1645"/><path d="M1655 761 L1644.5 757.8 V764.2 Z"/><path d="M1660.5 755 L1671.5 767 M1671.5 755 L1660.5 767"/><path d="M1607.6 756.5 V722"/><path d="M1607.6 712.5 L1611 722.5 H1604.2 Z"/><path d="M1602.5 695.5 L1607.6 702 L1612.7 695.5 M1607.6 702 V708.5"/></g></svg>
<div class="a" style="left:1226.5px;top:565px;width:31.0px;height:19px;background:#464646;border-radius:4px;"></div>
<span id="t96" class="t" style="top:565.50px;font-size:14px;line-height:18px;color:#a9a9a9;font-family:'Liberation Sans', sans-serif;left:1242.0px;transform-origin:50% 50%;transform:translateX(-50%) scaleX(1.0000);">+</span>
<div class="a" style="left:1260.5px;top:565px;width:158.5px;height:19px;background:#464646;border-radius:4px;"></div>
<span id="t97" class="t" style="top:566.10px;font-size:13.8px;line-height:18px;color:#a9a9a9;font-family:'Liberation Sans', sans-serif;left:1272px;transform-origin:0 50%;transform:scaleX(0.9345);">Пользовательский вид</span>
<div class="a" style="left:1421.5px;top:565px;width:64.0px;height:19px;background:#464646;border-radius:4px;"></div>
<span id="t98" class="t" style="top:566.10px;font-size:13.8px;line-height:18px;color:#a9a9a9;font-family:'Liberation Sans', sans-serif;left:1433px;transform-origin:0 50%;transform:scaleX(0.9386);">Каркас</span>
<div class="a" style="left:1488.5px;top:565px;width:185.5px;height:19px;background:#464646;border-radius:4px;"></div>
<span id="t99" class="t" style="top:566.10px;font-size:13.8px;line-height:18px;color:#a9a9a9;font-family:'Liberation Sans', sans-serif;left:1499.8px;transform-origin:0 50%;transform:scaleX(0.9553);">--- нет связанных видов ---</span>
<svg class="a" style="left:1835.3999999999999px;top:564.5px;" width="74.4" height="74.4" viewBox="0 0 74.4 74.4"><g fill="none" stroke="#666666" stroke-width="1"><circle cx="37.2" cy="37.2" r="33.2"/><circle cx="37.2" cy="37.2" r="21.2"/><path d="M2.0 37.2 H72.4 M37.2 2.0 V72.4"/></g><circle cx="37.2" cy="37.2" r="2.4" fill="#9a6a42"/></svg>
<div class="a" style="left:521px;top:899px;width:1395px;height:26px;background:#4a4a4a;border-bottom:1px solid #707070;border-left:1px solid #707070;border-right:1px solid #707070;"></div>
<svg class="a" style="left:526px;top:903px;" width="17" height="17" viewBox="0 0 17 17"><rect x="1" y="1.5" width="15" height="13.5" fill="#3a3a3a" stroke="#e6e6e6" stroke-width="1.1"/><rect x="1.5" y="2" width="14" height="4" fill="#6fa8ea"/><path d="M1 6.5 H16 M1 10.5 H16" stroke="#e6e6e6" stroke-width="1.1"/></svg>
<div class="a" style="left:566px;top:900.5px;width:65px;height:21px;background:#7b7b7b;"></div>
<span id="t100" class="t" style="top:902.20px;font-size:13.8px;line-height:18px;color:#ffffff;font-family:'Liberation Sans', sans-serif;left:574.4px;transform-origin:0 50%;transform:scaleX(0.9840);">Модель</span>
<div class="a" style="left:631.5px;top:900.5px;width:27.5px;height:21px;background:#4a4a4a;border:1px solid #5e5e5e;"></div>
<span id="t101" class="t" style="top:902.20px;font-size:13.8px;line-height:18px;color:#cdcdcd;font-family:'Liberation Sans', sans-serif;left:638.2px;transform-origin:0 50%;transform:scaleX(0.9412);">A4</span>
<div class="a" style="left:659.5px;top:900.5px;width:27.5px;height:21px;background:#4a4a4a;border:1px solid #5e5e5e;"></div>
<span id="t102" class="t" style="top:902.20px;font-size:13.8px;line-height:18px;color:#cdcdcd;font-family:'Liberation Sans', sans-serif;left:667.1px;transform-origin:0 50%;transform:scaleX(0.9471);">A3</span>
<div class="a" style="left:687.5px;top:900.5px;width:28.5px;height:21px;background:#4a4a4a;border:1px solid #5e5e5e;"></div>
<span id="t103" class="t" style="top:902.20px;font-size:13.8px;line-height:18px;color:#cdcdcd;font-family:'Liberation Sans', sans-serif;left:695.7px;transform-origin:0 50%;transform:scaleX(0.9588);">A2</span>
<div class="a" style="left:716.5px;top:900.5px;width:28.5px;height:21px;background:#4a4a4a;border:1px solid #5e5e5e;"></div>
<span id="t104" class="t" style="top:902.20px;font-size:13.8px;line-height:18px;color:#cdcdcd;font-family:'Liberation Sans', sans-serif;left:725px;transform-origin:0 50%;transform:scaleX(0.9529);">A1</span>
<div class="a" style="left:0px;top:925px;width:1918px;height:2px;background:#5a5a5a;"></div>
<div class="a" style="left:0px;top:927px;width:1918px;height:5px;background:#4b4b4b;"></div>
<div class="a" style="left:0px;top:932px;width:1918px;height:116px;background:#5c5c5c;"></div>
<div class="a" style="left:0px;top:931px;width:25px;height:117px;background:#808080;"></div>
<div class="a" style="left:25px;top:932px;width:2px;height:116px;background:#515151;"></div>
<svg class="a" style="left:3px;top:937px;" width="11" height="11" viewBox="0 0 11 11"><path d="M1 1 L10 10 M10 1 L1 10" stroke="#f8f8f8" stroke-width="2"/></svg>
<svg class="a" style="left:3px;top:957px;" width="11" height="13" viewBox="0 0 11 13"><path d="M3.2 1.2 H7.8 V6 H3.2 Z M6.2 1.2 V6" fill="none" stroke="#f8f8f8" stroke-width="1.5"/><path d="M1.2 6.5 H9.8 M5.5 6.5 V11.5" stroke="#f8f8f8" stroke-width="1.7"/></svg>
<div class="a" style="left:0;top:970px;width:25px;height:78px;overflow:hidden;"><span class="t" style="left:8.3px;top:75.6px;font-size:14px;line-height:16px;color:#e6e6e6;font-family:'Liberation Sans',sans-serif;transform-origin:0 0;transform:translate(-8px,0) rotate(-90deg) scaleX(0.926);">Командная</span></div>
<svg class="a" style="left:4px;top:971px;" width="8" height="5" viewBox="0 0 8 5"><path d="M2.5 1 Q4 2.2 5.5 1" stroke="#e0e0e0" stroke-width="1.1" fill="none"/></svg>
<div class="a" style="left:24px;top:932px;width:1894px;height:3px;background:#5c5c5c;"></div>
<span id="t105" class="t" style="top:936.90px;font-size:13.33px;line-height:17px;color:#e8e8e8;font-family:'Liberation Mono', monospace;left:28.3px;transform-origin:0 50%;">Введите первую точку:</span>
<span id="t106" class="t" style="top:954.90px;font-size:13.33px;line-height:17px;color:#e8e8e8;font-family:'Liberation Mono', monospace;left:28.3px;transform-origin:0 50%;">Вторая точка:</span>
<span id="t107" class="t" style="top:972.90px;font-size:13.33px;line-height:17px;color:#e8e8e8;font-family:'Liberation Mono', monospace;left:28.3px;transform-origin:0 50%;">NPC_SECT_HORIZ - Горизонтальное сечение</span>
<span id="t108" class="t" style="top:990.90px;font-size:13.33px;line-height:17px;color:#e8e8e8;font-family:'Liberation Mono', monospace;left:28.3px;transform-origin:0 50%;">Введите центральную точку:</span>
<span id="t109" class="t" style="top:1008.90px;font-size:13.33px;line-height:17px;color:#e8e8e8;font-family:'Liberation Mono', monospace;left:28.3px;transform-origin:0 50%;">Глубина сечения:</span>
<svg class="a" style="left:0px;top:931px;" width="400" height="6" viewBox="0 0 400 6"><path d="M51.7 3.2 H60 M92 3.2 H100.5" stroke="#e0e0e0" stroke-width="1.2"/><path d="M173 2 V4.6 M322.5 2 V5 M357.5 2 L356.5 4.6 M380 2 V4.6" stroke="#cfcfcf" stroke-width="1.2"/></svg>
<div class="a" style="left:25px;top:1027px;width:1893px;height:2px;background:#4c4c4c;"></div>
<span id="t110" class="t" style="top:1029.20px;font-size:13.33px;line-height:17px;color:#e8e8e8;font-family:'Liberation Mono', monospace;left:27.3px;transform-origin:0 50%;">Команда:</span>
<div class="a" style="left:0px;top:1048px;width:1918px;height:29px;background:#484848;"></div>
<div class="a" style="left:0px;top:1077px;width:1918px;height:3px;background:linear-gradient(90deg,#c9d6e6 0,#c2d0e2 21.2%,#1f5fd2 21.4%,#1a4fc0 45%,#123a9a 60%,#0c2466 75.8%,#a9bcd6 76%,#b9c9de 100%);"></div>
<div class="a" style="left:0px;top:1077px;width:1918px;height:1px;background:#3a3a3a;"></div>
<span id="t111" class="t" style="top:1054.20px;font-size:14.6px;line-height:19px;color:#e8e8e8;font-family:'Liberation Sans', sans-serif;left:2px;transform-origin:0 50%;transform:scaleX(0.9488);">36.2012,22.2530,44.2858</span>
<div class="a" style="left:167px;top:1051px;width:1px;height:24px;background:#414141;"></div>
<span id="t112" class="t" style="top:1054.20px;font-size:14.6px;line-height:19px;color:#e8e8e8;font-family:'Liberation Sans', sans-serif;left:178.5px;transform-origin:0 50%;transform:scaleX(0.9194);">ШАГ</span>
<div class="a" style="left:216px;top:1050px;width:58px;height:26px;background:#4e6889;border:1px solid #5a9be6;"></div>
<div class="a" style="left:273.5px;top:1050px;width:95.0px;height:26px;background:#4e6889;border:1px solid #5a9be6;"></div>
<div class="a" style="left:368px;top:1050px;width:117.5px;height:26px;background:#4e6889;border:1px solid #5a9be6;"></div>
<div class="a" style="left:485px;top:1050px;width:102.60000000000002px;height:26px;background:#4e6889;border:1px solid #5a9be6;"></div>
<div class="a" style="left:587px;top:1050px;width:96.70000000000005px;height:26px;background:#4e6889;border:1px solid #5a9be6;"></div>
<div class="a" style="left:882px;top:1050px;width:42px;height:26px;background:#4e6889;border:1px solid #5a9be6;"></div>
<div class="a" style="left:923.5px;top:1050px;width:100.29999999999995px;height:26px;background:#4e6889;border:1px solid #5a9be6;"></div>
<span id="t113" class="t" style="top:1054.20px;font-size:14.6px;line-height:19px;color:#e8e8e8;font-family:'Liberation Sans', sans-serif;left:225px;transform-origin:0 50%;transform:scaleX(0.8404);">СЕТКА</span>
<span id="t114" class="t" style="top:1054.20px;font-size:14.6px;line-height:19px;color:#e8e8e8;font-family:'Liberation Sans', sans-serif;left:283px;transform-origin:0 50%;transform:scaleX(0.8895);">оПРИВЯЗКА</span>
<span id="t115" class="t" style="top:1054.20px;font-size:14.6px;line-height:19px;color:#e8e8e8;font-family:'Liberation Sans', sans-serif;left:378px;transform-origin:0 50%;transform:scaleX(0.9120);">3D оПРИВЯЗКА</span>
<span id="t116" class="t" style="top:1054.20px;font-size:14.6px;line-height:19px;color:#e8e8e8;font-family:'Liberation Sans', sans-serif;left:495.5px;transform-origin:0 50%;transform:scaleX(0.8789);">ОТС-ОБЪЕКТ</span>
<span id="t117" class="t" style="top:1054.20px;font-size:14.6px;line-height:19px;color:#e8e8e8;font-family:'Liberation Sans', sans-serif;left:597.6px;transform-origin:0 50%;transform:scaleX(0.8977);">ОТС-ПОЛЯР</span>
<span id="t118" class="t" style="top:1054.20px;font-size:14.6px;line-height:19px;color:#e8e8e8;font-family:'Liberation Sans', sans-serif;left:694.7px;transform-origin:0 50%;transform:scaleX(0.9000);">ОРТО</span>
<span id="t119" class="t" style="top:1054.20px;font-size:14.6px;line-height:19px;color:#e8e8e8;font-family:'Liberation Sans', sans-serif;left:749.2px;transform-origin:0 50%;transform:scaleX(0.9487);">ДИН-ВВОД</span>
<span id="t120" class="t" style="top:1054.20px;font-size:14.6px;line-height:19px;color:#e8e8e8;font-family:'Liberation Sans', sans-serif;left:840.3px;transform-origin:0 50%;transform:scaleX(0.9065);">ИЗО</span>
<span id="t121" class="t" style="top:1054.20px;font-size:14.6px;line-height:19px;color:#e8e8e8;font-family:'Liberation Sans', sans-serif;left:891.4px;transform-origin:0 50%;transform:scaleX(0.7833);">ВЕС</span>
<span id="t122" class="t" style="top:1054.20px;font-size:14.6px;line-height:19px;color:#e8e8e8;font-family:'Liberation Sans', sans-serif;left:933.3px;transform-origin:0 50%;transform:scaleX(0.8945);">ШТРИХОВКА</span>
<span id="t123" class="t" style="top:1054.20px;font-size:14.6px;line-height:19px;color:#e8e8e8;font-family:'Liberation Sans', sans-serif;left:1094.3px;transform-origin:0 50%;transform:scaleX(0.9274);">МОДЕЛЬ</span>
<div class="a" style="left:739.6px;top:1052px;width:1px;height:22px;background:#3c3c3c;"></div>
<div class="a" style="left:830.8px;top:1052px;width:1px;height:22px;background:#3c3c3c;"></div>
<div class="a" style="left:876.6px;top:1052px;width:1px;height:22px;background:#3c3c3c;"></div>
<div class="a" style="left:1154.4px;top:1052px;width:1px;height:22px;background:#3c3c3c;"></div>
<div class="a" style="left:1181.4px;top:1052px;width:1px;height:22px;background:#3c3c3c;"></div>
<div class="a" style="left:1353.8px;top:1052px;width:1px;height:22px;background:#3c3c3c;"></div>
<div class="a" style="left:1382px;top:1052px;width:1px;height:22px;background:#3c3c3c;"></div>
<div class="a" style="left:1632.4px;top:1052px;width:1px;height:22px;background:#3c3c3c;"></div>
<div class="a" style="left:1665.2px;top:1052px;width:1px;height:22px;background:#3c3c3c;"></div>
<div class="a" style="left:1698.5px;top:1052px;width:1px;height:22px;background:#3c3c3c;"></div>
<div class="a" style="left:1731.3px;top:1052px;width:1px;height:22px;background:#3c3c3c;"></div>
<div class="a" style="left:1764.6px;top:1052px;width:1px;height:22px;background:#3c3c3c;"></div>
<div class="a" style="left:1797.4px;top:1052px;width:1px;height:22px;background:#3c3c3c;"></div>
<div class="a" style="left:1830.3px;top:1052px;width:1px;height:22px;background:#3c3c3c;"></div>
<div class="a" style="left:1858.6px;top:1052px;width:1px;height:22px;background:#3c3c3c;"></div>
<div class="a" style="left:1886.2px;top:1052px;width:1px;height:22px;background:#3c3c3c;"></div>
<svg class="a" style="left:1157px;top:1052px;" width="20" height="20" viewBox="0 0 20 20"><rect x="2" y="10" width="8" height="8" rx="1" fill="#cfcfcf"/><path d="M3.5 10 V8 Q3.5 5 6 5 Q8.5 5 8.5 8" fill="none" stroke="#cfcfcf" stroke-width="1.3"/><rect x="10" y="5" width="8" height="7" rx="1" fill="#e4e4e4"/><path d="M11.5 5 V3.5 Q11.5 1.2 14 1.2 Q16.5 1.2 16.5 3.5" fill="none" stroke="#e4e4e4" stroke-width="1.2"/><circle cx="6" cy="14" r="1.2" fill="#484848"/><circle cx="14" cy="8.5" r="1" fill="#484848"/></svg>
<svg class="a" style="left:1183px;top:1053px;" width="20" height="20" viewBox="0 0 20 20"><rect x="1" y="1" width="15" height="13" fill="#d2d2d2"/><path d="M7 11 H18 L12.5 17.5 Z" fill="#f4f4f4" stroke="#484848" stroke-width="0.8"/></svg>
<svg class="a" style="left:1356px;top:1052px;" width="24" height="22" viewBox="0 0 24 22"><circle cx="6" cy="6" r="4.2" fill="#f2e6a0"/><rect x="4" y="9.5" width="4" height="3.5" fill="#bdb07a"/><path d="M2 14 V18 H8 M12 3 H19 V12" stroke="#bdbdbd" stroke-width="1.1" fill="none"/><path transform="translate(11,9) scale(0.95)" d="M0 0 L0 11 L2.6 8.6 L4.6 13 L6.4 12.2 L4.4 7.9 L8 7.9 Z" fill="#ffffff" stroke="#333" stroke-width="0.6"/></svg>
<svg class="a" style="left:1387px;top:1052px;" width="18" height="22" viewBox="0 0 18 22"><circle cx="8.5" cy="8" r="6" fill="#b9b9b9"/><path d="M5 12 H12 L11 16 H6 Z" fill="#b9b9b9"/><rect x="6" y="16" width="5" height="3.5" fill="#8a8a8a"/></svg>
<div class="a" style="left:1410.7px;top:1050px;width:33.5px;height:26px;background:#4e6889;border:1px solid #5b9bd5;"></div>
<div class="a" style="left:1443.7px;top:1050px;width:33.3px;height:26px;background:#4e6889;border:1px solid #5b9bd5;"></div>
<svg class="a" style="left:1419px;top:1055px;" width="18" height="18" viewBox="0 0 18 18"><path d="M6 4 L11 12 M11 4 L6 12" stroke="#e8e8e8" stroke-width="1.1"/><circle cx="8.5" cy="8.5" r="7" fill="none" stroke="#e21f26" stroke-width="1.5"/><path d="M3.8 13.5 L13.3 3.6" stroke="#e21f26" stroke-width="1.5"/></svg>
<svg class="a" style="left:1452px;top:1054px;" width="20" height="20" viewBox="0 0 20 20"><path transform="translate(3,1) scale(0.9)" d="M0 0 L0 11 L2.6 8.6 L4.6 13 L6.4 12.2 L4.4 7.9 L8 7.9 Z" fill="#ffffff" stroke="#333" stroke-width="0.6"/><rect x="9" y="9" width="9" height="8.5" fill="#f0f0f0" stroke="#555" stroke-width="0.6"/><path d="M10.5 11.5 H16.5 M10.5 13.5 H16.5 M10.5 15.5 H16.5" stroke="#555" stroke-width="0.8"/></svg>
<svg class="a" style="left:1487px;top:1053px;" width="18" height="20" viewBox="0 0 18 20"><rect x="1.5" y="1" width="14" height="18" fill="#e8e8e8"/><rect x="3" y="3.5" width="11" height="13" fill="#484848"/><path d="M7 6 H13 M7 10 H13 M7 14 H13" stroke="#e8e8e8" stroke-width="1.1"/><path d="M4.2 6 H5.6 M4.2 10 H5.6 M4.2 14 H5.6" stroke="#e8e8e8" stroke-width="1.3"/></svg>
<div class="a" style="left:1509.7px;top:1050px;width:33.5px;height:26px;background:#4e6889;border:1px solid #5b9bd5;"></div>
<svg class="a" style="left:1516px;top:1053px;" width="24" height="20" viewBox="0 0 24 20"><path d="M5 2 V17 H21" stroke="#e8e8e8" stroke-width="1.2" fill="none"/><path d="M3 5 L5 1.5 L7 5 M18 15 L21.5 17 L18 19" stroke="#e8e8e8" stroke-width="1" fill="none"/><path d="M16 2 L12.5 9 H15 L13.5 14.5 L18.5 7 H15.8 Z" fill="#a9a9a9"/></svg>
<span id="t124" class="t" style="top:1051.80px;font-size:14px;line-height:18px;color:#e8e8e8;font-family:'Liberation Sans', sans-serif;left:1564.5px;transform-origin:0 50%;transform:scaleX(0.9936);">m1:100</span>
<svg class="a" style="left:1642px;top:1053px;" width="20" height="20" viewBox="0 0 20 20"><path d="M6 19 Q3 14.5 1.5 11 Q2.5 9 4.5 11 L6.2 13.2 V4.3 Q7.2 2.4 8.5 4.3 V9.5 V2.7 Q9.7 0.9 11 2.7 V9.5 V3.6 Q12.2 1.8 13.4 3.6 V10 V5.8 Q14.8 4.2 15.8 5.8 V13.5 Q15.8 17.3 14.2 19 Z" fill="#f4f4f4"/></svg>
<svg class="a" style="left:1675px;top:1053px;" width="20" height="20" viewBox="0 0 20 20"><circle cx="8" cy="8" r="6" fill="#e4f1ff" stroke="#9cc4f2" stroke-width="1.4"/><path d="M12.5 12.5 L18 18" stroke="#2f7fe0" stroke-width="2.6"/></svg>
<div class="a" style="left:1708.4px;top:1053.2px;width:18.8px;height:19.5px;background:#6fa8ea;"></div>
<svg class="a" style="left:1709px;top:1054px;" width="18" height="18" viewBox="0 0 18 18"><circle cx="8" cy="8" r="4.4" fill="none" stroke="#2a4a78" stroke-width="1.4"/><path d="M11.2 11.2 L15 15" stroke="#2a4a78" stroke-width="1.8"/></svg>
<svg class="a" style="left:1740px;top:1053px;" width="22" height="20" viewBox="0 0 22 20"><path d="M1.5 10 V1.5 H14 V5" stroke="#6fa8ea" stroke-width="1.3" fill="none"/><circle cx="12" cy="11" r="4.2" fill="none" stroke="#d6d6d6" stroke-width="1.2"/><path d="M15 14 L20 19" stroke="#d6d6d6" stroke-width="1.5"/></svg>
<svg class="a" style="left:1772px;top:1052px;" width="24" height="22" viewBox="0 0 24 22"><g stroke="#bdbdbd" stroke-width="1.1" fill="none"><ellipse cx="11.5" cy="12" rx="9.5" ry="4"/><path d="M11.5 2 V21 M9.5 4.5 L11.5 1.5 L13.5 4.5"/><path d="M16 17 L19.5 15.5 L19 19"/></g></svg>
<svg class="a" style="left:1806px;top:1053px;" width="22" height="20" viewBox="0 0 22 20"><path d="M3.5 11 A7 7 0 0 1 15.5 5.2" stroke="#7be04a" stroke-width="2.4" fill="none"/><path d="M13 1.5 L18.5 5.5 L12.5 8 Z" fill="#7be04a"/><path d="M17.5 9 A7 7 0 0 1 5.5 14.8" stroke="#7be04a" stroke-width="2.4" fill="none"/><path d="M8 18.5 L2.5 14.5 L8.5 12 Z" fill="#7be04a"/></svg>
<svg class="a" style="left:1834px;top:1052px;" width="22" height="22" viewBox="0 0 22 22"><rect x="1" y="2" width="12" height="9" fill="none" stroke="#d0d0d0" stroke-width="1.1"/><rect x="1" y="2" width="12" height="2.4" fill="#d0d0d0"/><rect x="8" y="11" width="10" height="8" rx="1" fill="#d6d6d6"/><path d="M10 11 V9 Q10 6.5 13 6.5 Q16 6.5 16 9" fill="none" stroke="#d6d6d6" stroke-width="1.3"/></svg>
<svg class="a" style="left:1862px;top:1052px;" width="22" height="22" viewBox="0 0 22 22"><rect x="1" y="8" width="12" height="11" fill="#d6d6d6"/><rect x="1" y="8" width="12" height="3" fill="#6fa8ea"/><path d="M5 5 V2 H9 M16 12 V16 H19" stroke="#cfcfcf" stroke-width="1" fill="none"/><path d="M13 8 L19 2 M15 2 H19 V6" stroke="#f0a860" stroke-width="1.3" fill="none"/></svg>
<svg class="a" style="left:1891px;top:1053px;" width="26" height="20" viewBox="0 0 26 20"><rect x="3" y="3" width="18" height="13" fill="#19a0e8" stroke="#f0f0f0" stroke-width="1.6"/><path d="M1 4 V1 H4 M20 1 H23 V4 M1 15 V18 H4 M23 15 V18 H20" stroke="#d6d6d6" stroke-width="1" fill="none"/></svg>
<div class="a" style="left:684px;top:156px;width:272px;height:427px;background:#5c5c5c;border:1px solid #4a6488;box-shadow:1px 1px 2px rgba(0,0,0,0.35);"></div>
<div class="a" style="left:685px;top:368.5px;width:269px;height:1px;background:#8c8c8c;"></div>
<span id="t125" class="t" style="top:170.90px;font-size:14.8px;line-height:19px;color:#ececec;font-family:'Liberation Sans', sans-serif;left:735.4px;transform-origin:0 50%;transform:scaleX(0.9421);">Обрезка по 2 точкам (снаружи)</span>
<span id="t126" class="t" style="top:212.80px;font-size:14.8px;line-height:19px;color:#ececec;font-family:'Liberation Sans', sans-serif;left:735.4px;transform-origin:0 50%;transform:scaleX(0.9421);">Обрезка по 3 точкам (снаружи)</span>
<span id="t127" class="t" style="top:254.80px;font-size:14.8px;line-height:19px;color:#ececec;font-family:'Liberation Sans', sans-serif;left:735.4px;transform-origin:0 50%;transform:scaleX(0.9398);">Обрезка полигоном (снаружи)</span>
<span id="t128" class="t" style="top:296.80px;font-size:14.8px;line-height:19px;color:#ececec;font-family:'Liberation Sans', sans-serif;left:735.4px;transform-origin:0 50%;transform:scaleX(0.9172);">Обрезка сферой (снаружи)</span>
<span id="t129" class="t" style="top:339.00px;font-size:14.8px;line-height:19px;color:#ececec;font-family:'Liberation Sans', sans-serif;left:735.4px;transform-origin:0 50%;transform:scaleX(0.9318);">Обрезка цилиндром (снаружи)</span>
<span id="t130" class="t" style="top:384.80px;font-size:14.8px;line-height:19px;color:#ececec;font-family:'Liberation Sans', sans-serif;left:735.4px;transform-origin:0 50%;transform:scaleX(0.9438);">Обрезка по 2 точкам (внутри)</span>
<span id="t131" class="t" style="top:426.70px;font-size:14.8px;line-height:19px;color:#ececec;font-family:'Liberation Sans', sans-serif;left:735.4px;transform-origin:0 50%;transform:scaleX(0.9438);">Обрезка по 3 точкам (внутри)</span>
<span id="t132" class="t" style="top:468.60px;font-size:14.8px;line-height:19px;color:#ececec;font-family:'Liberation Sans', sans-serif;left:735.4px;transform-origin:0 50%;transform:scaleX(0.9415);">Обрезка полигоном (внутри)</span>
<span id="t133" class="t" style="top:510.70px;font-size:14.8px;line-height:19px;color:#ececec;font-family:'Liberation Sans', sans-serif;left:735.4px;transform-origin:0 50%;transform:scaleX(0.9160);">Обрезка сферой (внутри)</span>
<span id="t134" class="t" style="top:552.60px;font-size:14.8px;line-height:19px;color:#ececec;font-family:'Liberation Sans', sans-serif;left:735.4px;transform-origin:0 50%;transform:scaleX(0.9330);">Обрезка цилиндром (внутри)</span>
<svg class="a" style="left:0px;top:0px;pointer-events:none;" width="1918" height="1080" viewBox="0 0 1918 1080"><defs><linearGradient id="gdc" x1="0" y1="0" x2="0.9" y2="1"><stop offset="0" stop-color="#f2f9fd"/><stop offset="1" stop-color="#a8d0ea"/></linearGradient><radialGradient id="gsp" cx="0.32" cy="0.28" r="0.75"><stop offset="0" stop-color="#a8a8a8"/><stop offset="0.3" stop-color="#484848"/><stop offset="0.7" stop-color="#505050"/><stop offset="1" stop-color="#5c5c5c"/></radialGradient></defs><rect x="693.2" y="164.3" width="31.6" height="30.1" fill="none" stroke="#6fa8ea" stroke-width="1.4"/><path transform="translate(702.5,169.5)" d="M6.5 21 Q0 21 0 14.5 Q0 9.5 5 9 Q5.5 2 12.5 1 Q17 0.3 21 3 V21 Z" fill="url(#gdc)"/><rect x="691.4" y="161.70000000000002" width="5.2" height="5.2" fill="#5c5c5c" stroke="#f0a860" stroke-width="1.3"/><rect x="722.4" y="191.6" width="5.2" height="5.2" fill="#5c5c5c" stroke="#f0a860" stroke-width="1.3"/><g transform="rotate(-13 709 221)"><rect x="695" y="208" width="28" height="27" fill="none" stroke="#6fa8ea" stroke-width="1.4"/></g><path transform="translate(702,211)" d="M6.5 21 Q0 21 0 14.5 Q0 9.5 5 9 Q5.5 2 12.5 1 Q17 0.3 21 3 V21 Z" fill="url(#gdc)"/><path d="M722 209 L726 229" stroke="#6fa8ea" stroke-width="1.6"/><rect x="690.4" y="207.70000000000002" width="5.2" height="5.2" fill="#5c5c5c" stroke="#f0a860" stroke-width="1.3"/><rect x="722.9" y="227.9" width="5.2" height="5.2" fill="#5c5c5c" stroke="#f0a860" stroke-width="1.3"/><rect x="696.6999999999999" y="233.9" width="5.2" height="5.2" fill="#5c5c5c" stroke="#f0a860" stroke-width="1.3"/><path d="M706.5 248.4 H724.8 V278.6 H693.2 V261.5 Z" fill="none" stroke="#6fa8ea" stroke-width="1.4"/><path transform="translate(702.5,254)" d="M6.5 21 Q0 21 0 14.5 Q0 9.5 5 9 Q5.5 2 12.5 1 Q17 0.3 21 3 V21 Z" fill="url(#gdc)"/><circle cx="710" cy="305" r="18" fill="url(#gsp)" stroke="#6fa8ea" stroke-width="1.6"/><path transform="translate(698.00,293.00) scale(0.3000,0.3333)" d="M22 62 C8 62 2 53 2 44 C2 34 10 27 20 28 C22 14 34 4 48 4 C62 4 72 12 76 24 C88 22 98 31 98 43 C98 54 90 62 78 62 Z" fill="url(#gdc)" stroke="none" stroke-width="0" vector-effect="non-scaling-stroke" stroke-linejoin="round" /><circle cx="713" cy="344" r="16.5" fill="#6fa8ea"/><circle cx="706.8" cy="350.8" r="16" fill="#5c5c5c" stroke="#6fa8ea" stroke-width="1.5"/><path transform="translate(699,339)" d="M6.5 21 Q0 21 0 14.5 Q0 9.5 5 9 Q5.5 2 12.5 1 Q17 0.3 21 3 V21 Z" fill="url(#gdc)"/><path transform="translate(698.00,378.00) scale(0.3200,0.3333)" d="M22 62 C8 62 2 53 2 44 C2 34 10 27 20 28 C22 14 34 4 48 4 C62 4 72 12 76 24 C88 22 98 31 98 43 C98 54 90 62 78 62 Z" fill="url(#gdc)" stroke="none" stroke-width="0" vector-effect="non-scaling-stroke" stroke-linejoin="round" /><rect x="693" y="385" width="23" height="22.5" fill="#5c5c5c" stroke="#6fa8ea" stroke-width="1.4"/><rect x="690.6999999999999" y="382.4" width="5.2" height="5.2" fill="#5c5c5c" stroke="#f0a860" stroke-width="1.3"/><rect x="712.9" y="404.9" width="5.2" height="5.2" fill="#5c5c5c" stroke="#f0a860" stroke-width="1.3"/><path transform="translate(698.00,418.00) scale(0.3200,0.3333)" d="M22 62 C8 62 2 53 2 44 C2 34 10 27 20 28 C22 14 34 4 48 4 C62 4 72 12 76 24 C88 22 98 31 98 43 C98 54 90 62 78 62 Z" fill="url(#gdc)" stroke="none" stroke-width="0" vector-effect="non-scaling-stroke" stroke-linejoin="round" /><g transform="rotate(-13 707 438)"><rect x="696" y="427" width="23" height="23" fill="#5c5c5c" stroke="#6fa8ea" stroke-width="1.4"/></g><rect x="690.6" y="426.4" width="5.2" height="5.2" fill="#5c5c5c" stroke="#f0a860" stroke-width="1.3"/><rect x="717.9" y="444.4" width="5.2" height="5.2" fill="#5c5c5c" stroke="#f0a860" stroke-width="1.3"/><rect x="695.6" y="449.4" width="5.2" height="5.2" fill="#5c5c5c" stroke="#f0a860" stroke-width="1.3"/><path transform="translate(698.00,462.00) scale(0.3200,0.3333)" d="M22 62 C8 62 2 53 2 44 C2 34 10 27 20 28 C22 14 34 4 48 4 C62 4 72 12 76 24 C88 22 98 31 98 43 C98 54 90 62 78 62 Z" fill="url(#gdc)" stroke="none" stroke-width="0" vector-effect="non-scaling-stroke" stroke-linejoin="round" /><path d="M701 469.5 H715.5 V491 H692 V478.5 Z" fill="#5c5c5c" stroke="#6fa8ea" stroke-width="1.4"/><path transform="translate(698.00,501.00) scale(0.3200,0.3333)" d="M22 62 C8 62 2 53 2 44 C2 34 10 27 20 28 C22 14 34 4 48 4 C62 4 72 12 76 24 C88 22 98 31 98 43 C98 54 90 62 78 62 Z" fill="url(#gdc)" stroke="none" stroke-width="0" vector-effect="non-scaling-stroke" stroke-linejoin="round" /><circle cx="705" cy="522" r="13.5" fill="url(#gsp)" stroke="#6fa8ea" stroke-width="1.6"/><circle cx="711" cy="558" r="13.5" fill="#6fa8ea"/><path transform="translate(702.00,547.00) scale(0.2800,0.3030)" d="M22 62 C8 62 2 53 2 44 C2 34 10 27 20 28 C22 14 34 4 48 4 C62 4 72 12 76 24 C88 22 98 31 98 43 C98 54 90 62 78 62 Z" fill="url(#gdc)" stroke="none" stroke-width="0" vector-effect="non-scaling-stroke" stroke-linejoin="round" /><circle cx="704.5" cy="565" r="13.5" fill="#5c5c5c" stroke="#6fa8ea" stroke-width="1.5"/></svg>
</div>
</body></html>
